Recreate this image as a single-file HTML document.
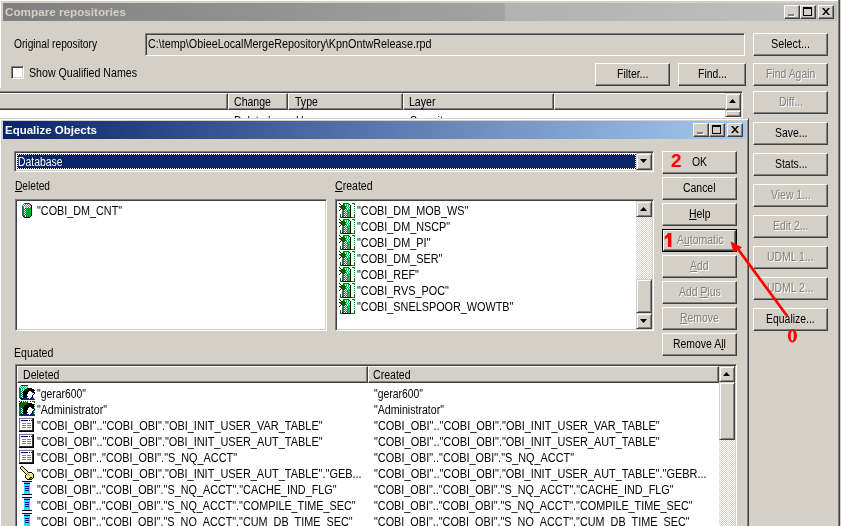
<!DOCTYPE html><html><head><meta charset="utf-8"><style>
html,body{margin:0;padding:0;}
body{width:841px;height:526px;overflow:hidden;position:relative;background:#d4d0c8;font-family:'Liberation Sans',sans-serif;font-size:12px;}
div{position:absolute;box-sizing:border-box;}
svg{position:absolute;}
.t{white-space:nowrap;line-height:15px;transform-origin:0 0;}
.dis{color:#808080 !important;text-shadow:1px 1px 0 #fff;}
.btn{background:#d4d0c8;border-top:1px solid #fff;border-left:1px solid #fff;border-right:1px solid #404040;border-bottom:1px solid #404040;box-shadow:inset -1px -1px 0 #808080;}
.sbtn{background:#d4d0c8;border-top:1px solid #d4d0c8;border-left:1px solid #d4d0c8;border-right:1px solid #404040;border-bottom:1px solid #404040;box-shadow:inset 1px 1px 0 #fff, inset -1px -1px 0 #808080;}
.sunk{border-top:1px solid #808080;border-left:1px solid #808080;border-right:1px solid #fff;border-bottom:1px solid #fff;box-shadow:inset 1px 1px 0 #404040, inset -1px -1px 0 #d4d0c8;}
.hd{background:#d4d0c8;border-top:1px solid #fff;border-left:1px solid #fff;border-right:1px solid #404040;border-bottom:1px solid #404040;box-shadow:inset -1px -1px 0 #808080;}
u{text-decoration:underline;text-underline-offset:1px;}
.chk{background-image:linear-gradient(45deg,#fff 25%,transparent 25%,transparent 75%,#fff 75%),linear-gradient(45deg,#fff 25%,transparent 25%,transparent 75%,#fff 75%);background-size:2px 2px;background-position:0 0,1px 1px;background-color:#d4d0c8;}
.red{color:#f00;font-weight:bold;font-size:19px;line-height:20px;white-space:nowrap;transform-origin:0 0;}
</style></head><body>
<div style="left:0;top:0;width:839px;height:88px;border-top:1px solid #fff;border-left:1px solid #fff;"></div>
<div style="left:838px;top:0;width:1px;height:526px;background:#808080"></div>
<div style="left:839px;top:0;width:1px;height:526px;background:#404040"></div>
<div style="left:3px;top:3px;width:834px;height:18px;background:linear-gradient(to right,#808080 0px,#a2a3a2 502px,#b0b1b0 502px,#c0c0c0 833px)"></div>
<div class="t" style="left:5px;top:5px;color:#d4d0c8;font-weight:bold;font-size:11px;transform:scaleX(1.0637);">Compare repositories</div>
<div class="btn" style="left:784px;top:5px;width:16px;height:14px;"></div>
<div class="btn" style="left:800px;top:5px;width:16px;height:14px;"></div>
<div class="btn" style="left:818px;top:5px;width:16px;height:14px;"></div>
<div style="left:789px;top:15px;width:6px;height:2px;background:#fff"></div>
<div style="left:788px;top:14px;width:6px;height:2px;background:#808080"></div>
<div style="left:803px;top:7px;width:9px;height:9px;border:1px solid #000;border-top-width:2px"></div>
<svg style="left:822px;top:8px" width="8" height="7" viewBox="0 0 8 7"><path d="M0 0h2l2 2.5L6 0h2L5 3.5 8 7H6L4 4.5 2 7H0l3-3.5z" fill="#000"/></svg>
<div class="t" style="left:14px;top:37px;color:#000;font-size:12px;transform:scaleX(0.8524);">Original repository</div>
<div class="sunk" style="left:145px;top:33px;width:600px;height:23px;background:#d4d0c8;"></div>
<div class="t" style="left:148px;top:37px;color:#000;font-size:12px;transform:scaleX(0.9006);">C:\temp\ObieeLocalMergeRepository\KpnOntwRelease.rpd</div>
<div class="btn" style="left:753px;top:33px;width:75px;height:23px;"></div>
<div class="t" style="left:771.0px;top:37px;color:#000;font-size:12px;transform:scaleX(0.9001);">Select...</div>
<div class="sunk" style="left:11px;top:66px;width:13px;height:13px;background:#fff;"></div>
<div class="t" style="left:29px;top:66px;color:#000;font-size:12px;transform:scaleX(0.8849);">Show Qualified Names</div>
<div class="btn" style="left:595px;top:63px;width:75px;height:23px;"></div>
<div class="t" style="left:617.0px;top:67px;color:#000;font-size:12px;transform:scaleX(0.8700);">Filter...</div>
<div class="btn" style="left:678px;top:63px;width:68px;height:23px;"></div>
<div class="t" style="left:697.5px;top:67px;color:#000;font-size:12px;transform:scaleX(0.8700);">Find...</div>
<div class="btn" style="left:753px;top:63px;width:75px;height:23px;"></div>
<div class="t dis" style="left:766.0px;top:67px;color:#000;font-size:12px;transform:scaleX(0.8700);">Find Again</div>
<div style="left:0;top:91px;width:743px;height:40px;background:#fff;border-top:1px solid #808080;border-right:1px solid #fff;box-shadow:inset 0 1px 0 #404040, inset -1px 0 0 #d4d0c8"></div>
<div class="hd" style="left:-1px;top:93px;width:229px;height:17px"></div>
<div class="hd" style="left:228px;top:93px;width:60px;height:17px"></div>
<div class="t" style="left:234px;top:95px;color:#000;font-size:12px;transform:scaleX(0.8800);">Change</div>
<div class="hd" style="left:288px;top:93px;width:115px;height:17px"></div>
<div class="t" style="left:295px;top:95px;color:#000;font-size:12px;transform:scaleX(0.8800);">Type</div>
<div class="hd" style="left:403px;top:93px;width:151px;height:17px"></div>
<div class="t" style="left:409px;top:95px;color:#000;font-size:12px;transform:scaleX(0.8800);">Layer</div>
<div class="hd" style="left:554px;top:93px;width:187px;height:17px"></div>
<div class="t" style="left:234px;top:114px;color:#000;font-size:12px;transform:scaleX(0.8800);">Deleted</div>
<div class="t" style="left:296px;top:114px;color:#000;font-size:12px;transform:scaleX(0.8800);">User</div>
<div class="t" style="left:410px;top:114px;color:#000;font-size:12px;transform:scaleX(0.8800);">Security</div>
<div class="sbtn" style="left:725px;top:93px;width:16px;height:17px;"></div>
<svg style="left:729px;top:99px" width="7" height="4"><path d="M3.5 0L7 4H0z" fill="#000"/></svg>
<div class="sbtn" style="left:725px;top:110px;width:16px;height:7px;"></div>
<div class="btn" style="left:753px;top:91px;width:75px;height:23px;"></div>
<div class="t dis" style="left:778.5px;top:95px;color:#000;font-size:12px;transform:scaleX(0.8700);">Diff...</div>
<div class="btn" style="left:753px;top:122px;width:75px;height:23px;"></div>
<div class="t" style="left:774.5px;top:126px;color:#000;font-size:12px;transform:scaleX(0.8700);">Save...</div>
<div class="btn" style="left:753px;top:153px;width:75px;height:23px;"></div>
<div class="t" style="left:774.5px;top:157px;color:#000;font-size:12px;transform:scaleX(0.8700);">Stats...</div>
<div class="btn" style="left:753px;top:184px;width:75px;height:23px;"></div>
<div class="t dis" style="left:770.5px;top:188px;color:#000;font-size:12px;transform:scaleX(0.8700);">View 1...</div>
<div class="btn" style="left:753px;top:215px;width:75px;height:23px;"></div>
<div class="t dis" style="left:773.0px;top:219px;color:#000;font-size:12px;transform:scaleX(0.8700);">Edit 2...</div>
<div class="btn" style="left:753px;top:246px;width:75px;height:23px;"></div>
<div class="t dis" style="left:767.0px;top:250px;color:#000;font-size:12px;transform:scaleX(0.8700);">UDML 1...</div>
<div class="btn" style="left:753px;top:277px;width:75px;height:23px;"></div>
<div class="t dis" style="left:767.0px;top:281px;color:#000;font-size:12px;transform:scaleX(0.8700);">UDML 2...</div>
<div class="btn" style="left:753px;top:308px;width:75px;height:23px;"></div>
<div class="t" style="left:766.0px;top:312px;color:#000;font-size:12px;transform:scaleX(0.8700);">Equalize...</div>
<div style="left:-1px;top:118px;width:750px;height:420px;background:#d4d0c8;border-top:1px solid #d4d0c8;border-left:1px solid #d4d0c8;border-right:1px solid #404040;box-shadow:inset 1px 1px 0 #fff, inset -1px 0 0 #808080"></div>
<div style="left:3px;top:121px;width:743px;height:18px;background:linear-gradient(to right,#0a246a,#a6caf0)"></div>
<div class="t" style="left:5px;top:123px;color:#fff;font-weight:bold;font-size:11px;transform:scaleX(1.0443);">Equalize Objects</div>
<div class="btn" style="left:693px;top:123px;width:16px;height:14px;"></div>
<div class="btn" style="left:709px;top:123px;width:16px;height:14px;"></div>
<div class="btn" style="left:727px;top:123px;width:16px;height:14px;"></div>
<div style="left:698px;top:133px;width:6px;height:2px;background:#fff"></div>
<div style="left:697px;top:132px;width:6px;height:2px;background:#808080"></div>
<div style="left:712px;top:125px;width:9px;height:9px;border:1px solid #000;border-top-width:2px"></div>
<svg style="left:731px;top:126px" width="8" height="7" viewBox="0 0 8 7"><path d="M0 0h2l2 2.5L6 0h2L5 3.5 8 7H6L4 4.5 2 7H0l3-3.5z" fill="#000"/></svg>
<div class="sunk" style="left:14px;top:151px;width:640px;height:21px;background:#fff;"></div>
<div style="left:17px;top:154px;width:619px;height:15px;background:#0a246a;border:1px dotted #000;background-clip:padding-box"></div>
<div class="t" style="left:18px;top:155px;color:#fff;font-size:12px;transform:scaleX(0.8684);">Database</div>
<div class="sbtn" style="left:636px;top:153px;width:16px;height:17px;"></div>
<svg style="left:640px;top:159px" width="7" height="4"><path d="M0 0h7L3.5 4z" fill="#000"/></svg>
<div class="t" style="left:15px;top:179px;color:#000;font-size:12px;transform:scaleX(0.8462);"><u>D</u>eleted</div>
<div class="t" style="left:335px;top:179px;color:#000;font-size:12px;transform:scaleX(0.8800);"><u>C</u>reated</div>
<div class="sunk" style="left:15px;top:199px;width:312px;height:132px;background:#fff;"></div>
<div class="sunk" style="left:335px;top:199px;width:319px;height:132px;background:#fff;"></div>
<div class="chk" style="left:636px;top:217px;width:16px;height:62px"></div>
<div class="sbtn" style="left:636px;top:201px;width:16px;height:16px;"></div>
<svg style="left:640px;top:207px" width="7" height="4"><path d="M3.5 0L7 4H0z" fill="#000"/></svg>
<div class="sbtn" style="left:636px;top:279px;width:16px;height:34px;"></div>
<div class="sbtn" style="left:636px;top:313px;width:16px;height:16px;"></div>
<svg style="left:640px;top:319px" width="7" height="4"><path d="M0 0h7L3.5 4z" fill="#000"/></svg>
<svg style="left:22px;top:203px" width="10" height="15" shape-rendering="crispEdges"><rect x="2" y="0" width="1" height="1" fill="#808080"/><rect x="3" y="0" width="4" height="1" fill="#303030"/><rect x="7" y="0" width="1" height="1" fill="#808080"/><rect x="1" y="1" width="1" height="1" fill="#00c040"/><rect x="2" y="1" width="1" height="1" fill="#ffffff"/><rect x="3" y="1" width="1" height="1" fill="#00c040"/><rect x="4" y="1" width="1" height="1" fill="#ffffff"/><rect x="5" y="1" width="1" height="1" fill="#00c040"/><rect x="6" y="1" width="1" height="1" fill="#ffffff"/><rect x="7" y="1" width="1" height="1" fill="#00c040"/><rect x="8" y="1" width="1" height="1" fill="#303030"/><rect x="0" y="2" width="1" height="1" fill="#40a090"/><rect x="1" y="2" width="1" height="1" fill="#ffffff"/><rect x="2" y="2" width="1" height="1" fill="#00c040"/><rect x="3" y="2" width="1" height="1" fill="#ffffff"/><rect x="4" y="2" width="1" height="1" fill="#00c040"/><rect x="5" y="2" width="1" height="1" fill="#ffffff"/><rect x="6" y="2" width="1" height="1" fill="#00c040"/><rect x="7" y="2" width="1" height="1" fill="#ffffff"/><rect x="8" y="2" width="1" height="1" fill="#00c040"/><rect x="9" y="2" width="1" height="1" fill="#000000"/><rect x="0" y="3" width="1" height="1" fill="#207070"/><rect x="1" y="3" width="1" height="1" fill="#40a090"/><rect x="2" y="3" width="1" height="1" fill="#ffffff"/><rect x="3" y="3" width="1" height="1" fill="#00c040"/><rect x="4" y="3" width="1" height="1" fill="#ffffff"/><rect x="5" y="3" width="1" height="1" fill="#00c040"/><rect x="6" y="3" width="1" height="1" fill="#ffffff"/><rect x="7" y="3" width="1" height="1" fill="#00c040"/><rect x="8" y="3" width="1" height="1" fill="#ffffff"/><rect x="9" y="3" width="1" height="1" fill="#000000"/><rect x="0" y="4" width="2" height="1" fill="#207070"/><rect x="2" y="4" width="2" height="1" fill="#ffffff"/><rect x="4" y="4" width="1" height="1" fill="#00c040"/><rect x="5" y="4" width="1" height="1" fill="#ffffff"/><rect x="6" y="4" width="1" height="1" fill="#00c040"/><rect x="7" y="4" width="1" height="1" fill="#ffffff"/><rect x="8" y="4" width="1" height="1" fill="#00c040"/><rect x="9" y="4" width="1" height="1" fill="#000000"/><rect x="0" y="5" width="2" height="1" fill="#207070"/><rect x="2" y="5" width="1" height="1" fill="#ffffff"/><rect x="3" y="5" width="1" height="1" fill="#008040"/><rect x="4" y="5" width="1" height="1" fill="#00c040"/><rect x="5" y="5" width="1" height="1" fill="#008040"/><rect x="6" y="5" width="1" height="1" fill="#00c040"/><rect x="7" y="5" width="1" height="1" fill="#008040"/><rect x="8" y="5" width="1" height="1" fill="#00c040"/><rect x="9" y="5" width="1" height="1" fill="#000000"/><rect x="0" y="6" width="2" height="1" fill="#207070"/><rect x="2" y="6" width="1" height="1" fill="#008040"/><rect x="3" y="6" width="1" height="1" fill="#ffffff"/><rect x="4" y="6" width="1" height="1" fill="#008040"/><rect x="5" y="6" width="1" height="1" fill="#00c040"/><rect x="6" y="6" width="1" height="1" fill="#008040"/><rect x="7" y="6" width="2" height="1" fill="#00c040"/><rect x="9" y="6" width="1" height="1" fill="#000000"/><rect x="0" y="7" width="2" height="1" fill="#207070"/><rect x="2" y="7" width="1" height="1" fill="#ffffff"/><rect x="3" y="7" width="1" height="1" fill="#008040"/><rect x="4" y="7" width="1" height="1" fill="#00c040"/><rect x="5" y="7" width="1" height="1" fill="#008040"/><rect x="6" y="7" width="1" height="1" fill="#00c040"/><rect x="7" y="7" width="1" height="1" fill="#008040"/><rect x="8" y="7" width="1" height="1" fill="#00c040"/><rect x="9" y="7" width="1" height="1" fill="#000000"/><rect x="0" y="8" width="2" height="1" fill="#207070"/><rect x="2" y="8" width="1" height="1" fill="#008040"/><rect x="3" y="8" width="1" height="1" fill="#ffffff"/><rect x="4" y="8" width="1" height="1" fill="#008040"/><rect x="5" y="8" width="1" height="1" fill="#00c040"/><rect x="6" y="8" width="1" height="1" fill="#008040"/><rect x="7" y="8" width="2" height="1" fill="#00c040"/><rect x="9" y="8" width="1" height="1" fill="#000000"/><rect x="0" y="9" width="2" height="1" fill="#207070"/><rect x="2" y="9" width="1" height="1" fill="#ffffff"/><rect x="3" y="9" width="1" height="1" fill="#008040"/><rect x="4" y="9" width="1" height="1" fill="#00c040"/><rect x="5" y="9" width="1" height="1" fill="#008040"/><rect x="6" y="9" width="1" height="1" fill="#00c040"/><rect x="7" y="9" width="1" height="1" fill="#008040"/><rect x="8" y="9" width="1" height="1" fill="#00c040"/><rect x="9" y="9" width="1" height="1" fill="#000000"/><rect x="0" y="10" width="2" height="1" fill="#207070"/><rect x="2" y="10" width="1" height="1" fill="#008040"/><rect x="3" y="10" width="1" height="1" fill="#ffffff"/><rect x="4" y="10" width="1" height="1" fill="#008040"/><rect x="5" y="10" width="1" height="1" fill="#00c040"/><rect x="6" y="10" width="1" height="1" fill="#008040"/><rect x="7" y="10" width="2" height="1" fill="#00c040"/><rect x="9" y="10" width="1" height="1" fill="#000000"/><rect x="0" y="11" width="2" height="1" fill="#207070"/><rect x="2" y="11" width="1" height="1" fill="#ffffff"/><rect x="3" y="11" width="1" height="1" fill="#008040"/><rect x="4" y="11" width="1" height="1" fill="#00c040"/><rect x="5" y="11" width="1" height="1" fill="#008040"/><rect x="6" y="11" width="1" height="1" fill="#00c040"/><rect x="7" y="11" width="1" height="1" fill="#008040"/><rect x="8" y="11" width="1" height="1" fill="#00c040"/><rect x="9" y="11" width="1" height="1" fill="#000000"/><rect x="0" y="12" width="2" height="1" fill="#207070"/><rect x="2" y="12" width="1" height="1" fill="#008040"/><rect x="3" y="12" width="1" height="1" fill="#ffffff"/><rect x="4" y="12" width="1" height="1" fill="#008040"/><rect x="5" y="12" width="1" height="1" fill="#00c040"/><rect x="6" y="12" width="1" height="1" fill="#008040"/><rect x="7" y="12" width="2" height="1" fill="#00c040"/><rect x="9" y="12" width="1" height="1" fill="#000000"/><rect x="1" y="13" width="1" height="1" fill="#000000"/><rect x="2" y="13" width="1" height="1" fill="#207070"/><rect x="3" y="13" width="1" height="1" fill="#ffffff"/><rect x="4" y="13" width="1" height="1" fill="#008040"/><rect x="5" y="13" width="1" height="1" fill="#00c040"/><rect x="6" y="13" width="1" height="1" fill="#008040"/><rect x="7" y="13" width="1" height="1" fill="#00c040"/><rect x="8" y="13" width="1" height="1" fill="#000000"/><rect x="2" y="14" width="6" height="1" fill="#000000"/></svg>
<div class="t" style="left:37px;top:204px;color:#000;font-size:12px;transform:scaleX(0.9000);">"COBI_DM_CNT"</div>
<svg style="left:339px;top:203px" width="16" height="15" shape-rendering="crispEdges"><rect x="0" y="0" width="1" height="1" fill="#000000"/><rect x="4" y="0" width="6" height="1" fill="#008000"/><rect x="13" y="0" width="3" height="1" fill="#008000"/><rect x="1" y="1" width="1" height="1" fill="#000000"/><rect x="4" y="1" width="1" height="1" fill="#006000"/><rect x="5" y="1" width="1" height="1" fill="#00c040"/><rect x="6" y="1" width="1" height="1" fill="#ffffff"/><rect x="7" y="1" width="1" height="1" fill="#00c040"/><rect x="8" y="1" width="1" height="1" fill="#ffffff"/><rect x="9" y="1" width="1" height="1" fill="#00c040"/><rect x="10" y="1" width="1" height="1" fill="#303030"/><rect x="15" y="1" width="1" height="1" fill="#008000"/><rect x="2" y="2" width="4" height="1" fill="#006000"/><rect x="6" y="2" width="1" height="1" fill="#ffffff"/><rect x="7" y="2" width="1" height="1" fill="#00c040"/><rect x="8" y="2" width="1" height="1" fill="#ffffff"/><rect x="9" y="2" width="1" height="1" fill="#00c040"/><rect x="10" y="2" width="1" height="1" fill="#ffffff"/><rect x="11" y="2" width="1" height="1" fill="#000000"/><rect x="0" y="3" width="1" height="1" fill="#000000"/><rect x="1" y="3" width="6" height="1" fill="#006000"/><rect x="7" y="3" width="1" height="1" fill="#00c040"/><rect x="8" y="3" width="1" height="1" fill="#ffffff"/><rect x="9" y="3" width="1" height="1" fill="#00c040"/><rect x="10" y="3" width="1" height="1" fill="#ffffff"/><rect x="11" y="3" width="1" height="1" fill="#000000"/><rect x="15" y="3" width="1" height="1" fill="#008000"/><rect x="1" y="4" width="6" height="1" fill="#006000"/><rect x="7" y="4" width="1" height="1" fill="#ffffff"/><rect x="8" y="4" width="1" height="1" fill="#00c040"/><rect x="9" y="4" width="1" height="1" fill="#ffffff"/><rect x="10" y="4" width="1" height="1" fill="#00c040"/><rect x="11" y="4" width="1" height="1" fill="#000000"/><rect x="2" y="5" width="5" height="1" fill="#006000"/><rect x="7" y="5" width="1" height="1" fill="#00c040"/><rect x="8" y="5" width="1" height="1" fill="#ffffff"/><rect x="9" y="5" width="1" height="1" fill="#00c040"/><rect x="10" y="5" width="1" height="1" fill="#ffffff"/><rect x="11" y="5" width="1" height="1" fill="#000000"/><rect x="15" y="5" width="1" height="1" fill="#008000"/><rect x="1" y="6" width="1" height="1" fill="#000000"/><rect x="3" y="6" width="3" height="1" fill="#006000"/><rect x="6" y="6" width="1" height="1" fill="#ffffff"/><rect x="7" y="6" width="1" height="1" fill="#008040"/><rect x="8" y="6" width="1" height="1" fill="#ffffff"/><rect x="9" y="6" width="2" height="1" fill="#00c040"/><rect x="11" y="6" width="1" height="1" fill="#000000"/><rect x="0" y="7" width="1" height="1" fill="#000000"/><rect x="3" y="7" width="2" height="1" fill="#207070"/><rect x="5" y="7" width="1" height="1" fill="#ffffff"/><rect x="6" y="7" width="1" height="1" fill="#008040"/><rect x="7" y="7" width="1" height="1" fill="#ffffff"/><rect x="8" y="7" width="1" height="1" fill="#008040"/><rect x="9" y="7" width="2" height="1" fill="#00c040"/><rect x="11" y="7" width="1" height="1" fill="#000000"/><rect x="15" y="7" width="1" height="1" fill="#008000"/><rect x="3" y="8" width="2" height="1" fill="#207070"/><rect x="5" y="8" width="1" height="1" fill="#008040"/><rect x="6" y="8" width="1" height="1" fill="#ffffff"/><rect x="7" y="8" width="1" height="1" fill="#008040"/><rect x="8" y="8" width="3" height="1" fill="#00c040"/><rect x="11" y="8" width="1" height="1" fill="#000000"/><rect x="3" y="9" width="2" height="1" fill="#207070"/><rect x="5" y="9" width="1" height="1" fill="#ffffff"/><rect x="6" y="9" width="1" height="1" fill="#008040"/><rect x="7" y="9" width="1" height="1" fill="#ffffff"/><rect x="8" y="9" width="1" height="1" fill="#008040"/><rect x="9" y="9" width="2" height="1" fill="#00c040"/><rect x="11" y="9" width="1" height="1" fill="#000000"/><rect x="15" y="9" width="1" height="1" fill="#008000"/><rect x="3" y="10" width="2" height="1" fill="#207070"/><rect x="5" y="10" width="1" height="1" fill="#008040"/><rect x="6" y="10" width="1" height="1" fill="#ffffff"/><rect x="7" y="10" width="1" height="1" fill="#008040"/><rect x="8" y="10" width="3" height="1" fill="#00c040"/><rect x="11" y="10" width="1" height="1" fill="#000000"/><rect x="1" y="11" width="1" height="1" fill="#008000"/><rect x="3" y="11" width="2" height="1" fill="#207070"/><rect x="5" y="11" width="1" height="1" fill="#ffffff"/><rect x="6" y="11" width="1" height="1" fill="#008040"/><rect x="7" y="11" width="1" height="1" fill="#ffffff"/><rect x="8" y="11" width="1" height="1" fill="#008040"/><rect x="9" y="11" width="2" height="1" fill="#00c040"/><rect x="11" y="11" width="1" height="1" fill="#000000"/><rect x="15" y="11" width="1" height="1" fill="#008000"/><rect x="1" y="12" width="1" height="1" fill="#008000"/><rect x="3" y="12" width="2" height="1" fill="#207070"/><rect x="5" y="12" width="1" height="1" fill="#008040"/><rect x="6" y="12" width="1" height="1" fill="#ffffff"/><rect x="7" y="12" width="1" height="1" fill="#008040"/><rect x="8" y="12" width="3" height="1" fill="#00c040"/><rect x="11" y="12" width="1" height="1" fill="#000000"/><rect x="15" y="12" width="1" height="1" fill="#008000"/><rect x="1" y="13" width="1" height="1" fill="#008000"/><rect x="3" y="13" width="1" height="1" fill="#000000"/><rect x="4" y="13" width="1" height="1" fill="#207070"/><rect x="5" y="13" width="1" height="1" fill="#ffffff"/><rect x="6" y="13" width="1" height="1" fill="#008040"/><rect x="7" y="13" width="1" height="1" fill="#ffffff"/><rect x="8" y="13" width="1" height="1" fill="#008040"/><rect x="9" y="13" width="2" height="1" fill="#00c040"/><rect x="11" y="13" width="1" height="1" fill="#000000"/><rect x="15" y="13" width="1" height="1" fill="#008000"/><rect x="1" y="14" width="3" height="1" fill="#008000"/><rect x="4" y="14" width="8" height="1" fill="#000000"/><rect x="12" y="14" width="4" height="1" fill="#008000"/></svg>
<div class="t" style="left:357px;top:204px;color:#000;font-size:12px;transform:scaleX(0.9030);">"COBI_DM_MOB_WS"</div>
<svg style="left:339px;top:219px" width="16" height="15" shape-rendering="crispEdges"><rect x="0" y="0" width="1" height="1" fill="#000000"/><rect x="4" y="0" width="6" height="1" fill="#008000"/><rect x="13" y="0" width="3" height="1" fill="#008000"/><rect x="1" y="1" width="1" height="1" fill="#000000"/><rect x="4" y="1" width="1" height="1" fill="#006000"/><rect x="5" y="1" width="1" height="1" fill="#00c040"/><rect x="6" y="1" width="1" height="1" fill="#ffffff"/><rect x="7" y="1" width="1" height="1" fill="#00c040"/><rect x="8" y="1" width="1" height="1" fill="#ffffff"/><rect x="9" y="1" width="1" height="1" fill="#00c040"/><rect x="10" y="1" width="1" height="1" fill="#303030"/><rect x="15" y="1" width="1" height="1" fill="#008000"/><rect x="2" y="2" width="4" height="1" fill="#006000"/><rect x="6" y="2" width="1" height="1" fill="#ffffff"/><rect x="7" y="2" width="1" height="1" fill="#00c040"/><rect x="8" y="2" width="1" height="1" fill="#ffffff"/><rect x="9" y="2" width="1" height="1" fill="#00c040"/><rect x="10" y="2" width="1" height="1" fill="#ffffff"/><rect x="11" y="2" width="1" height="1" fill="#000000"/><rect x="0" y="3" width="1" height="1" fill="#000000"/><rect x="1" y="3" width="6" height="1" fill="#006000"/><rect x="7" y="3" width="1" height="1" fill="#00c040"/><rect x="8" y="3" width="1" height="1" fill="#ffffff"/><rect x="9" y="3" width="1" height="1" fill="#00c040"/><rect x="10" y="3" width="1" height="1" fill="#ffffff"/><rect x="11" y="3" width="1" height="1" fill="#000000"/><rect x="15" y="3" width="1" height="1" fill="#008000"/><rect x="1" y="4" width="6" height="1" fill="#006000"/><rect x="7" y="4" width="1" height="1" fill="#ffffff"/><rect x="8" y="4" width="1" height="1" fill="#00c040"/><rect x="9" y="4" width="1" height="1" fill="#ffffff"/><rect x="10" y="4" width="1" height="1" fill="#00c040"/><rect x="11" y="4" width="1" height="1" fill="#000000"/><rect x="2" y="5" width="5" height="1" fill="#006000"/><rect x="7" y="5" width="1" height="1" fill="#00c040"/><rect x="8" y="5" width="1" height="1" fill="#ffffff"/><rect x="9" y="5" width="1" height="1" fill="#00c040"/><rect x="10" y="5" width="1" height="1" fill="#ffffff"/><rect x="11" y="5" width="1" height="1" fill="#000000"/><rect x="15" y="5" width="1" height="1" fill="#008000"/><rect x="1" y="6" width="1" height="1" fill="#000000"/><rect x="3" y="6" width="3" height="1" fill="#006000"/><rect x="6" y="6" width="1" height="1" fill="#ffffff"/><rect x="7" y="6" width="1" height="1" fill="#008040"/><rect x="8" y="6" width="1" height="1" fill="#ffffff"/><rect x="9" y="6" width="2" height="1" fill="#00c040"/><rect x="11" y="6" width="1" height="1" fill="#000000"/><rect x="0" y="7" width="1" height="1" fill="#000000"/><rect x="3" y="7" width="2" height="1" fill="#207070"/><rect x="5" y="7" width="1" height="1" fill="#ffffff"/><rect x="6" y="7" width="1" height="1" fill="#008040"/><rect x="7" y="7" width="1" height="1" fill="#ffffff"/><rect x="8" y="7" width="1" height="1" fill="#008040"/><rect x="9" y="7" width="2" height="1" fill="#00c040"/><rect x="11" y="7" width="1" height="1" fill="#000000"/><rect x="15" y="7" width="1" height="1" fill="#008000"/><rect x="3" y="8" width="2" height="1" fill="#207070"/><rect x="5" y="8" width="1" height="1" fill="#008040"/><rect x="6" y="8" width="1" height="1" fill="#ffffff"/><rect x="7" y="8" width="1" height="1" fill="#008040"/><rect x="8" y="8" width="3" height="1" fill="#00c040"/><rect x="11" y="8" width="1" height="1" fill="#000000"/><rect x="3" y="9" width="2" height="1" fill="#207070"/><rect x="5" y="9" width="1" height="1" fill="#ffffff"/><rect x="6" y="9" width="1" height="1" fill="#008040"/><rect x="7" y="9" width="1" height="1" fill="#ffffff"/><rect x="8" y="9" width="1" height="1" fill="#008040"/><rect x="9" y="9" width="2" height="1" fill="#00c040"/><rect x="11" y="9" width="1" height="1" fill="#000000"/><rect x="15" y="9" width="1" height="1" fill="#008000"/><rect x="3" y="10" width="2" height="1" fill="#207070"/><rect x="5" y="10" width="1" height="1" fill="#008040"/><rect x="6" y="10" width="1" height="1" fill="#ffffff"/><rect x="7" y="10" width="1" height="1" fill="#008040"/><rect x="8" y="10" width="3" height="1" fill="#00c040"/><rect x="11" y="10" width="1" height="1" fill="#000000"/><rect x="1" y="11" width="1" height="1" fill="#008000"/><rect x="3" y="11" width="2" height="1" fill="#207070"/><rect x="5" y="11" width="1" height="1" fill="#ffffff"/><rect x="6" y="11" width="1" height="1" fill="#008040"/><rect x="7" y="11" width="1" height="1" fill="#ffffff"/><rect x="8" y="11" width="1" height="1" fill="#008040"/><rect x="9" y="11" width="2" height="1" fill="#00c040"/><rect x="11" y="11" width="1" height="1" fill="#000000"/><rect x="15" y="11" width="1" height="1" fill="#008000"/><rect x="1" y="12" width="1" height="1" fill="#008000"/><rect x="3" y="12" width="2" height="1" fill="#207070"/><rect x="5" y="12" width="1" height="1" fill="#008040"/><rect x="6" y="12" width="1" height="1" fill="#ffffff"/><rect x="7" y="12" width="1" height="1" fill="#008040"/><rect x="8" y="12" width="3" height="1" fill="#00c040"/><rect x="11" y="12" width="1" height="1" fill="#000000"/><rect x="15" y="12" width="1" height="1" fill="#008000"/><rect x="1" y="13" width="1" height="1" fill="#008000"/><rect x="3" y="13" width="1" height="1" fill="#000000"/><rect x="4" y="13" width="1" height="1" fill="#207070"/><rect x="5" y="13" width="1" height="1" fill="#ffffff"/><rect x="6" y="13" width="1" height="1" fill="#008040"/><rect x="7" y="13" width="1" height="1" fill="#ffffff"/><rect x="8" y="13" width="1" height="1" fill="#008040"/><rect x="9" y="13" width="2" height="1" fill="#00c040"/><rect x="11" y="13" width="1" height="1" fill="#000000"/><rect x="15" y="13" width="1" height="1" fill="#008000"/><rect x="1" y="14" width="3" height="1" fill="#008000"/><rect x="4" y="14" width="8" height="1" fill="#000000"/><rect x="12" y="14" width="4" height="1" fill="#008000"/></svg>
<div class="t" style="left:357px;top:220px;color:#000;font-size:12px;transform:scaleX(0.9030);">"COBI_DM_NSCP"</div>
<svg style="left:339px;top:235px" width="16" height="15" shape-rendering="crispEdges"><rect x="0" y="0" width="1" height="1" fill="#000000"/><rect x="4" y="0" width="6" height="1" fill="#008000"/><rect x="13" y="0" width="3" height="1" fill="#008000"/><rect x="1" y="1" width="1" height="1" fill="#000000"/><rect x="4" y="1" width="1" height="1" fill="#006000"/><rect x="5" y="1" width="1" height="1" fill="#00c040"/><rect x="6" y="1" width="1" height="1" fill="#ffffff"/><rect x="7" y="1" width="1" height="1" fill="#00c040"/><rect x="8" y="1" width="1" height="1" fill="#ffffff"/><rect x="9" y="1" width="1" height="1" fill="#00c040"/><rect x="10" y="1" width="1" height="1" fill="#303030"/><rect x="15" y="1" width="1" height="1" fill="#008000"/><rect x="2" y="2" width="4" height="1" fill="#006000"/><rect x="6" y="2" width="1" height="1" fill="#ffffff"/><rect x="7" y="2" width="1" height="1" fill="#00c040"/><rect x="8" y="2" width="1" height="1" fill="#ffffff"/><rect x="9" y="2" width="1" height="1" fill="#00c040"/><rect x="10" y="2" width="1" height="1" fill="#ffffff"/><rect x="11" y="2" width="1" height="1" fill="#000000"/><rect x="0" y="3" width="1" height="1" fill="#000000"/><rect x="1" y="3" width="6" height="1" fill="#006000"/><rect x="7" y="3" width="1" height="1" fill="#00c040"/><rect x="8" y="3" width="1" height="1" fill="#ffffff"/><rect x="9" y="3" width="1" height="1" fill="#00c040"/><rect x="10" y="3" width="1" height="1" fill="#ffffff"/><rect x="11" y="3" width="1" height="1" fill="#000000"/><rect x="15" y="3" width="1" height="1" fill="#008000"/><rect x="1" y="4" width="6" height="1" fill="#006000"/><rect x="7" y="4" width="1" height="1" fill="#ffffff"/><rect x="8" y="4" width="1" height="1" fill="#00c040"/><rect x="9" y="4" width="1" height="1" fill="#ffffff"/><rect x="10" y="4" width="1" height="1" fill="#00c040"/><rect x="11" y="4" width="1" height="1" fill="#000000"/><rect x="2" y="5" width="5" height="1" fill="#006000"/><rect x="7" y="5" width="1" height="1" fill="#00c040"/><rect x="8" y="5" width="1" height="1" fill="#ffffff"/><rect x="9" y="5" width="1" height="1" fill="#00c040"/><rect x="10" y="5" width="1" height="1" fill="#ffffff"/><rect x="11" y="5" width="1" height="1" fill="#000000"/><rect x="15" y="5" width="1" height="1" fill="#008000"/><rect x="1" y="6" width="1" height="1" fill="#000000"/><rect x="3" y="6" width="3" height="1" fill="#006000"/><rect x="6" y="6" width="1" height="1" fill="#ffffff"/><rect x="7" y="6" width="1" height="1" fill="#008040"/><rect x="8" y="6" width="1" height="1" fill="#ffffff"/><rect x="9" y="6" width="2" height="1" fill="#00c040"/><rect x="11" y="6" width="1" height="1" fill="#000000"/><rect x="0" y="7" width="1" height="1" fill="#000000"/><rect x="3" y="7" width="2" height="1" fill="#207070"/><rect x="5" y="7" width="1" height="1" fill="#ffffff"/><rect x="6" y="7" width="1" height="1" fill="#008040"/><rect x="7" y="7" width="1" height="1" fill="#ffffff"/><rect x="8" y="7" width="1" height="1" fill="#008040"/><rect x="9" y="7" width="2" height="1" fill="#00c040"/><rect x="11" y="7" width="1" height="1" fill="#000000"/><rect x="15" y="7" width="1" height="1" fill="#008000"/><rect x="3" y="8" width="2" height="1" fill="#207070"/><rect x="5" y="8" width="1" height="1" fill="#008040"/><rect x="6" y="8" width="1" height="1" fill="#ffffff"/><rect x="7" y="8" width="1" height="1" fill="#008040"/><rect x="8" y="8" width="3" height="1" fill="#00c040"/><rect x="11" y="8" width="1" height="1" fill="#000000"/><rect x="3" y="9" width="2" height="1" fill="#207070"/><rect x="5" y="9" width="1" height="1" fill="#ffffff"/><rect x="6" y="9" width="1" height="1" fill="#008040"/><rect x="7" y="9" width="1" height="1" fill="#ffffff"/><rect x="8" y="9" width="1" height="1" fill="#008040"/><rect x="9" y="9" width="2" height="1" fill="#00c040"/><rect x="11" y="9" width="1" height="1" fill="#000000"/><rect x="15" y="9" width="1" height="1" fill="#008000"/><rect x="3" y="10" width="2" height="1" fill="#207070"/><rect x="5" y="10" width="1" height="1" fill="#008040"/><rect x="6" y="10" width="1" height="1" fill="#ffffff"/><rect x="7" y="10" width="1" height="1" fill="#008040"/><rect x="8" y="10" width="3" height="1" fill="#00c040"/><rect x="11" y="10" width="1" height="1" fill="#000000"/><rect x="1" y="11" width="1" height="1" fill="#008000"/><rect x="3" y="11" width="2" height="1" fill="#207070"/><rect x="5" y="11" width="1" height="1" fill="#ffffff"/><rect x="6" y="11" width="1" height="1" fill="#008040"/><rect x="7" y="11" width="1" height="1" fill="#ffffff"/><rect x="8" y="11" width="1" height="1" fill="#008040"/><rect x="9" y="11" width="2" height="1" fill="#00c040"/><rect x="11" y="11" width="1" height="1" fill="#000000"/><rect x="15" y="11" width="1" height="1" fill="#008000"/><rect x="1" y="12" width="1" height="1" fill="#008000"/><rect x="3" y="12" width="2" height="1" fill="#207070"/><rect x="5" y="12" width="1" height="1" fill="#008040"/><rect x="6" y="12" width="1" height="1" fill="#ffffff"/><rect x="7" y="12" width="1" height="1" fill="#008040"/><rect x="8" y="12" width="3" height="1" fill="#00c040"/><rect x="11" y="12" width="1" height="1" fill="#000000"/><rect x="15" y="12" width="1" height="1" fill="#008000"/><rect x="1" y="13" width="1" height="1" fill="#008000"/><rect x="3" y="13" width="1" height="1" fill="#000000"/><rect x="4" y="13" width="1" height="1" fill="#207070"/><rect x="5" y="13" width="1" height="1" fill="#ffffff"/><rect x="6" y="13" width="1" height="1" fill="#008040"/><rect x="7" y="13" width="1" height="1" fill="#ffffff"/><rect x="8" y="13" width="1" height="1" fill="#008040"/><rect x="9" y="13" width="2" height="1" fill="#00c040"/><rect x="11" y="13" width="1" height="1" fill="#000000"/><rect x="15" y="13" width="1" height="1" fill="#008000"/><rect x="1" y="14" width="3" height="1" fill="#008000"/><rect x="4" y="14" width="8" height="1" fill="#000000"/><rect x="12" y="14" width="4" height="1" fill="#008000"/></svg>
<div class="t" style="left:357px;top:236px;color:#000;font-size:12px;transform:scaleX(0.9030);">"COBI_DM_PI"</div>
<svg style="left:339px;top:251px" width="16" height="15" shape-rendering="crispEdges"><rect x="0" y="0" width="1" height="1" fill="#000000"/><rect x="4" y="0" width="6" height="1" fill="#008000"/><rect x="13" y="0" width="3" height="1" fill="#008000"/><rect x="1" y="1" width="1" height="1" fill="#000000"/><rect x="4" y="1" width="1" height="1" fill="#006000"/><rect x="5" y="1" width="1" height="1" fill="#00c040"/><rect x="6" y="1" width="1" height="1" fill="#ffffff"/><rect x="7" y="1" width="1" height="1" fill="#00c040"/><rect x="8" y="1" width="1" height="1" fill="#ffffff"/><rect x="9" y="1" width="1" height="1" fill="#00c040"/><rect x="10" y="1" width="1" height="1" fill="#303030"/><rect x="15" y="1" width="1" height="1" fill="#008000"/><rect x="2" y="2" width="4" height="1" fill="#006000"/><rect x="6" y="2" width="1" height="1" fill="#ffffff"/><rect x="7" y="2" width="1" height="1" fill="#00c040"/><rect x="8" y="2" width="1" height="1" fill="#ffffff"/><rect x="9" y="2" width="1" height="1" fill="#00c040"/><rect x="10" y="2" width="1" height="1" fill="#ffffff"/><rect x="11" y="2" width="1" height="1" fill="#000000"/><rect x="0" y="3" width="1" height="1" fill="#000000"/><rect x="1" y="3" width="6" height="1" fill="#006000"/><rect x="7" y="3" width="1" height="1" fill="#00c040"/><rect x="8" y="3" width="1" height="1" fill="#ffffff"/><rect x="9" y="3" width="1" height="1" fill="#00c040"/><rect x="10" y="3" width="1" height="1" fill="#ffffff"/><rect x="11" y="3" width="1" height="1" fill="#000000"/><rect x="15" y="3" width="1" height="1" fill="#008000"/><rect x="1" y="4" width="6" height="1" fill="#006000"/><rect x="7" y="4" width="1" height="1" fill="#ffffff"/><rect x="8" y="4" width="1" height="1" fill="#00c040"/><rect x="9" y="4" width="1" height="1" fill="#ffffff"/><rect x="10" y="4" width="1" height="1" fill="#00c040"/><rect x="11" y="4" width="1" height="1" fill="#000000"/><rect x="2" y="5" width="5" height="1" fill="#006000"/><rect x="7" y="5" width="1" height="1" fill="#00c040"/><rect x="8" y="5" width="1" height="1" fill="#ffffff"/><rect x="9" y="5" width="1" height="1" fill="#00c040"/><rect x="10" y="5" width="1" height="1" fill="#ffffff"/><rect x="11" y="5" width="1" height="1" fill="#000000"/><rect x="15" y="5" width="1" height="1" fill="#008000"/><rect x="1" y="6" width="1" height="1" fill="#000000"/><rect x="3" y="6" width="3" height="1" fill="#006000"/><rect x="6" y="6" width="1" height="1" fill="#ffffff"/><rect x="7" y="6" width="1" height="1" fill="#008040"/><rect x="8" y="6" width="1" height="1" fill="#ffffff"/><rect x="9" y="6" width="2" height="1" fill="#00c040"/><rect x="11" y="6" width="1" height="1" fill="#000000"/><rect x="0" y="7" width="1" height="1" fill="#000000"/><rect x="3" y="7" width="2" height="1" fill="#207070"/><rect x="5" y="7" width="1" height="1" fill="#ffffff"/><rect x="6" y="7" width="1" height="1" fill="#008040"/><rect x="7" y="7" width="1" height="1" fill="#ffffff"/><rect x="8" y="7" width="1" height="1" fill="#008040"/><rect x="9" y="7" width="2" height="1" fill="#00c040"/><rect x="11" y="7" width="1" height="1" fill="#000000"/><rect x="15" y="7" width="1" height="1" fill="#008000"/><rect x="3" y="8" width="2" height="1" fill="#207070"/><rect x="5" y="8" width="1" height="1" fill="#008040"/><rect x="6" y="8" width="1" height="1" fill="#ffffff"/><rect x="7" y="8" width="1" height="1" fill="#008040"/><rect x="8" y="8" width="3" height="1" fill="#00c040"/><rect x="11" y="8" width="1" height="1" fill="#000000"/><rect x="3" y="9" width="2" height="1" fill="#207070"/><rect x="5" y="9" width="1" height="1" fill="#ffffff"/><rect x="6" y="9" width="1" height="1" fill="#008040"/><rect x="7" y="9" width="1" height="1" fill="#ffffff"/><rect x="8" y="9" width="1" height="1" fill="#008040"/><rect x="9" y="9" width="2" height="1" fill="#00c040"/><rect x="11" y="9" width="1" height="1" fill="#000000"/><rect x="15" y="9" width="1" height="1" fill="#008000"/><rect x="3" y="10" width="2" height="1" fill="#207070"/><rect x="5" y="10" width="1" height="1" fill="#008040"/><rect x="6" y="10" width="1" height="1" fill="#ffffff"/><rect x="7" y="10" width="1" height="1" fill="#008040"/><rect x="8" y="10" width="3" height="1" fill="#00c040"/><rect x="11" y="10" width="1" height="1" fill="#000000"/><rect x="1" y="11" width="1" height="1" fill="#008000"/><rect x="3" y="11" width="2" height="1" fill="#207070"/><rect x="5" y="11" width="1" height="1" fill="#ffffff"/><rect x="6" y="11" width="1" height="1" fill="#008040"/><rect x="7" y="11" width="1" height="1" fill="#ffffff"/><rect x="8" y="11" width="1" height="1" fill="#008040"/><rect x="9" y="11" width="2" height="1" fill="#00c040"/><rect x="11" y="11" width="1" height="1" fill="#000000"/><rect x="15" y="11" width="1" height="1" fill="#008000"/><rect x="1" y="12" width="1" height="1" fill="#008000"/><rect x="3" y="12" width="2" height="1" fill="#207070"/><rect x="5" y="12" width="1" height="1" fill="#008040"/><rect x="6" y="12" width="1" height="1" fill="#ffffff"/><rect x="7" y="12" width="1" height="1" fill="#008040"/><rect x="8" y="12" width="3" height="1" fill="#00c040"/><rect x="11" y="12" width="1" height="1" fill="#000000"/><rect x="15" y="12" width="1" height="1" fill="#008000"/><rect x="1" y="13" width="1" height="1" fill="#008000"/><rect x="3" y="13" width="1" height="1" fill="#000000"/><rect x="4" y="13" width="1" height="1" fill="#207070"/><rect x="5" y="13" width="1" height="1" fill="#ffffff"/><rect x="6" y="13" width="1" height="1" fill="#008040"/><rect x="7" y="13" width="1" height="1" fill="#ffffff"/><rect x="8" y="13" width="1" height="1" fill="#008040"/><rect x="9" y="13" width="2" height="1" fill="#00c040"/><rect x="11" y="13" width="1" height="1" fill="#000000"/><rect x="15" y="13" width="1" height="1" fill="#008000"/><rect x="1" y="14" width="3" height="1" fill="#008000"/><rect x="4" y="14" width="8" height="1" fill="#000000"/><rect x="12" y="14" width="4" height="1" fill="#008000"/></svg>
<div class="t" style="left:357px;top:252px;color:#000;font-size:12px;transform:scaleX(0.9030);">"COBI_DM_SER"</div>
<svg style="left:339px;top:267px" width="16" height="15" shape-rendering="crispEdges"><rect x="0" y="0" width="1" height="1" fill="#000000"/><rect x="4" y="0" width="6" height="1" fill="#008000"/><rect x="13" y="0" width="3" height="1" fill="#008000"/><rect x="1" y="1" width="1" height="1" fill="#000000"/><rect x="4" y="1" width="1" height="1" fill="#006000"/><rect x="5" y="1" width="1" height="1" fill="#00c040"/><rect x="6" y="1" width="1" height="1" fill="#ffffff"/><rect x="7" y="1" width="1" height="1" fill="#00c040"/><rect x="8" y="1" width="1" height="1" fill="#ffffff"/><rect x="9" y="1" width="1" height="1" fill="#00c040"/><rect x="10" y="1" width="1" height="1" fill="#303030"/><rect x="15" y="1" width="1" height="1" fill="#008000"/><rect x="2" y="2" width="4" height="1" fill="#006000"/><rect x="6" y="2" width="1" height="1" fill="#ffffff"/><rect x="7" y="2" width="1" height="1" fill="#00c040"/><rect x="8" y="2" width="1" height="1" fill="#ffffff"/><rect x="9" y="2" width="1" height="1" fill="#00c040"/><rect x="10" y="2" width="1" height="1" fill="#ffffff"/><rect x="11" y="2" width="1" height="1" fill="#000000"/><rect x="0" y="3" width="1" height="1" fill="#000000"/><rect x="1" y="3" width="6" height="1" fill="#006000"/><rect x="7" y="3" width="1" height="1" fill="#00c040"/><rect x="8" y="3" width="1" height="1" fill="#ffffff"/><rect x="9" y="3" width="1" height="1" fill="#00c040"/><rect x="10" y="3" width="1" height="1" fill="#ffffff"/><rect x="11" y="3" width="1" height="1" fill="#000000"/><rect x="15" y="3" width="1" height="1" fill="#008000"/><rect x="1" y="4" width="6" height="1" fill="#006000"/><rect x="7" y="4" width="1" height="1" fill="#ffffff"/><rect x="8" y="4" width="1" height="1" fill="#00c040"/><rect x="9" y="4" width="1" height="1" fill="#ffffff"/><rect x="10" y="4" width="1" height="1" fill="#00c040"/><rect x="11" y="4" width="1" height="1" fill="#000000"/><rect x="2" y="5" width="5" height="1" fill="#006000"/><rect x="7" y="5" width="1" height="1" fill="#00c040"/><rect x="8" y="5" width="1" height="1" fill="#ffffff"/><rect x="9" y="5" width="1" height="1" fill="#00c040"/><rect x="10" y="5" width="1" height="1" fill="#ffffff"/><rect x="11" y="5" width="1" height="1" fill="#000000"/><rect x="15" y="5" width="1" height="1" fill="#008000"/><rect x="1" y="6" width="1" height="1" fill="#000000"/><rect x="3" y="6" width="3" height="1" fill="#006000"/><rect x="6" y="6" width="1" height="1" fill="#ffffff"/><rect x="7" y="6" width="1" height="1" fill="#008040"/><rect x="8" y="6" width="1" height="1" fill="#ffffff"/><rect x="9" y="6" width="2" height="1" fill="#00c040"/><rect x="11" y="6" width="1" height="1" fill="#000000"/><rect x="0" y="7" width="1" height="1" fill="#000000"/><rect x="3" y="7" width="2" height="1" fill="#207070"/><rect x="5" y="7" width="1" height="1" fill="#ffffff"/><rect x="6" y="7" width="1" height="1" fill="#008040"/><rect x="7" y="7" width="1" height="1" fill="#ffffff"/><rect x="8" y="7" width="1" height="1" fill="#008040"/><rect x="9" y="7" width="2" height="1" fill="#00c040"/><rect x="11" y="7" width="1" height="1" fill="#000000"/><rect x="15" y="7" width="1" height="1" fill="#008000"/><rect x="3" y="8" width="2" height="1" fill="#207070"/><rect x="5" y="8" width="1" height="1" fill="#008040"/><rect x="6" y="8" width="1" height="1" fill="#ffffff"/><rect x="7" y="8" width="1" height="1" fill="#008040"/><rect x="8" y="8" width="3" height="1" fill="#00c040"/><rect x="11" y="8" width="1" height="1" fill="#000000"/><rect x="3" y="9" width="2" height="1" fill="#207070"/><rect x="5" y="9" width="1" height="1" fill="#ffffff"/><rect x="6" y="9" width="1" height="1" fill="#008040"/><rect x="7" y="9" width="1" height="1" fill="#ffffff"/><rect x="8" y="9" width="1" height="1" fill="#008040"/><rect x="9" y="9" width="2" height="1" fill="#00c040"/><rect x="11" y="9" width="1" height="1" fill="#000000"/><rect x="15" y="9" width="1" height="1" fill="#008000"/><rect x="3" y="10" width="2" height="1" fill="#207070"/><rect x="5" y="10" width="1" height="1" fill="#008040"/><rect x="6" y="10" width="1" height="1" fill="#ffffff"/><rect x="7" y="10" width="1" height="1" fill="#008040"/><rect x="8" y="10" width="3" height="1" fill="#00c040"/><rect x="11" y="10" width="1" height="1" fill="#000000"/><rect x="1" y="11" width="1" height="1" fill="#008000"/><rect x="3" y="11" width="2" height="1" fill="#207070"/><rect x="5" y="11" width="1" height="1" fill="#ffffff"/><rect x="6" y="11" width="1" height="1" fill="#008040"/><rect x="7" y="11" width="1" height="1" fill="#ffffff"/><rect x="8" y="11" width="1" height="1" fill="#008040"/><rect x="9" y="11" width="2" height="1" fill="#00c040"/><rect x="11" y="11" width="1" height="1" fill="#000000"/><rect x="15" y="11" width="1" height="1" fill="#008000"/><rect x="1" y="12" width="1" height="1" fill="#008000"/><rect x="3" y="12" width="2" height="1" fill="#207070"/><rect x="5" y="12" width="1" height="1" fill="#008040"/><rect x="6" y="12" width="1" height="1" fill="#ffffff"/><rect x="7" y="12" width="1" height="1" fill="#008040"/><rect x="8" y="12" width="3" height="1" fill="#00c040"/><rect x="11" y="12" width="1" height="1" fill="#000000"/><rect x="15" y="12" width="1" height="1" fill="#008000"/><rect x="1" y="13" width="1" height="1" fill="#008000"/><rect x="3" y="13" width="1" height="1" fill="#000000"/><rect x="4" y="13" width="1" height="1" fill="#207070"/><rect x="5" y="13" width="1" height="1" fill="#ffffff"/><rect x="6" y="13" width="1" height="1" fill="#008040"/><rect x="7" y="13" width="1" height="1" fill="#ffffff"/><rect x="8" y="13" width="1" height="1" fill="#008040"/><rect x="9" y="13" width="2" height="1" fill="#00c040"/><rect x="11" y="13" width="1" height="1" fill="#000000"/><rect x="15" y="13" width="1" height="1" fill="#008000"/><rect x="1" y="14" width="3" height="1" fill="#008000"/><rect x="4" y="14" width="8" height="1" fill="#000000"/><rect x="12" y="14" width="4" height="1" fill="#008000"/></svg>
<div class="t" style="left:357px;top:268px;color:#000;font-size:12px;transform:scaleX(0.9030);">"COBI_REF"</div>
<svg style="left:339px;top:283px" width="16" height="15" shape-rendering="crispEdges"><rect x="0" y="0" width="1" height="1" fill="#000000"/><rect x="4" y="0" width="6" height="1" fill="#008000"/><rect x="13" y="0" width="3" height="1" fill="#008000"/><rect x="1" y="1" width="1" height="1" fill="#000000"/><rect x="4" y="1" width="1" height="1" fill="#006000"/><rect x="5" y="1" width="1" height="1" fill="#00c040"/><rect x="6" y="1" width="1" height="1" fill="#ffffff"/><rect x="7" y="1" width="1" height="1" fill="#00c040"/><rect x="8" y="1" width="1" height="1" fill="#ffffff"/><rect x="9" y="1" width="1" height="1" fill="#00c040"/><rect x="10" y="1" width="1" height="1" fill="#303030"/><rect x="15" y="1" width="1" height="1" fill="#008000"/><rect x="2" y="2" width="4" height="1" fill="#006000"/><rect x="6" y="2" width="1" height="1" fill="#ffffff"/><rect x="7" y="2" width="1" height="1" fill="#00c040"/><rect x="8" y="2" width="1" height="1" fill="#ffffff"/><rect x="9" y="2" width="1" height="1" fill="#00c040"/><rect x="10" y="2" width="1" height="1" fill="#ffffff"/><rect x="11" y="2" width="1" height="1" fill="#000000"/><rect x="0" y="3" width="1" height="1" fill="#000000"/><rect x="1" y="3" width="6" height="1" fill="#006000"/><rect x="7" y="3" width="1" height="1" fill="#00c040"/><rect x="8" y="3" width="1" height="1" fill="#ffffff"/><rect x="9" y="3" width="1" height="1" fill="#00c040"/><rect x="10" y="3" width="1" height="1" fill="#ffffff"/><rect x="11" y="3" width="1" height="1" fill="#000000"/><rect x="15" y="3" width="1" height="1" fill="#008000"/><rect x="1" y="4" width="6" height="1" fill="#006000"/><rect x="7" y="4" width="1" height="1" fill="#ffffff"/><rect x="8" y="4" width="1" height="1" fill="#00c040"/><rect x="9" y="4" width="1" height="1" fill="#ffffff"/><rect x="10" y="4" width="1" height="1" fill="#00c040"/><rect x="11" y="4" width="1" height="1" fill="#000000"/><rect x="2" y="5" width="5" height="1" fill="#006000"/><rect x="7" y="5" width="1" height="1" fill="#00c040"/><rect x="8" y="5" width="1" height="1" fill="#ffffff"/><rect x="9" y="5" width="1" height="1" fill="#00c040"/><rect x="10" y="5" width="1" height="1" fill="#ffffff"/><rect x="11" y="5" width="1" height="1" fill="#000000"/><rect x="15" y="5" width="1" height="1" fill="#008000"/><rect x="1" y="6" width="1" height="1" fill="#000000"/><rect x="3" y="6" width="3" height="1" fill="#006000"/><rect x="6" y="6" width="1" height="1" fill="#ffffff"/><rect x="7" y="6" width="1" height="1" fill="#008040"/><rect x="8" y="6" width="1" height="1" fill="#ffffff"/><rect x="9" y="6" width="2" height="1" fill="#00c040"/><rect x="11" y="6" width="1" height="1" fill="#000000"/><rect x="0" y="7" width="1" height="1" fill="#000000"/><rect x="3" y="7" width="2" height="1" fill="#207070"/><rect x="5" y="7" width="1" height="1" fill="#ffffff"/><rect x="6" y="7" width="1" height="1" fill="#008040"/><rect x="7" y="7" width="1" height="1" fill="#ffffff"/><rect x="8" y="7" width="1" height="1" fill="#008040"/><rect x="9" y="7" width="2" height="1" fill="#00c040"/><rect x="11" y="7" width="1" height="1" fill="#000000"/><rect x="15" y="7" width="1" height="1" fill="#008000"/><rect x="3" y="8" width="2" height="1" fill="#207070"/><rect x="5" y="8" width="1" height="1" fill="#008040"/><rect x="6" y="8" width="1" height="1" fill="#ffffff"/><rect x="7" y="8" width="1" height="1" fill="#008040"/><rect x="8" y="8" width="3" height="1" fill="#00c040"/><rect x="11" y="8" width="1" height="1" fill="#000000"/><rect x="3" y="9" width="2" height="1" fill="#207070"/><rect x="5" y="9" width="1" height="1" fill="#ffffff"/><rect x="6" y="9" width="1" height="1" fill="#008040"/><rect x="7" y="9" width="1" height="1" fill="#ffffff"/><rect x="8" y="9" width="1" height="1" fill="#008040"/><rect x="9" y="9" width="2" height="1" fill="#00c040"/><rect x="11" y="9" width="1" height="1" fill="#000000"/><rect x="15" y="9" width="1" height="1" fill="#008000"/><rect x="3" y="10" width="2" height="1" fill="#207070"/><rect x="5" y="10" width="1" height="1" fill="#008040"/><rect x="6" y="10" width="1" height="1" fill="#ffffff"/><rect x="7" y="10" width="1" height="1" fill="#008040"/><rect x="8" y="10" width="3" height="1" fill="#00c040"/><rect x="11" y="10" width="1" height="1" fill="#000000"/><rect x="1" y="11" width="1" height="1" fill="#008000"/><rect x="3" y="11" width="2" height="1" fill="#207070"/><rect x="5" y="11" width="1" height="1" fill="#ffffff"/><rect x="6" y="11" width="1" height="1" fill="#008040"/><rect x="7" y="11" width="1" height="1" fill="#ffffff"/><rect x="8" y="11" width="1" height="1" fill="#008040"/><rect x="9" y="11" width="2" height="1" fill="#00c040"/><rect x="11" y="11" width="1" height="1" fill="#000000"/><rect x="15" y="11" width="1" height="1" fill="#008000"/><rect x="1" y="12" width="1" height="1" fill="#008000"/><rect x="3" y="12" width="2" height="1" fill="#207070"/><rect x="5" y="12" width="1" height="1" fill="#008040"/><rect x="6" y="12" width="1" height="1" fill="#ffffff"/><rect x="7" y="12" width="1" height="1" fill="#008040"/><rect x="8" y="12" width="3" height="1" fill="#00c040"/><rect x="11" y="12" width="1" height="1" fill="#000000"/><rect x="15" y="12" width="1" height="1" fill="#008000"/><rect x="1" y="13" width="1" height="1" fill="#008000"/><rect x="3" y="13" width="1" height="1" fill="#000000"/><rect x="4" y="13" width="1" height="1" fill="#207070"/><rect x="5" y="13" width="1" height="1" fill="#ffffff"/><rect x="6" y="13" width="1" height="1" fill="#008040"/><rect x="7" y="13" width="1" height="1" fill="#ffffff"/><rect x="8" y="13" width="1" height="1" fill="#008040"/><rect x="9" y="13" width="2" height="1" fill="#00c040"/><rect x="11" y="13" width="1" height="1" fill="#000000"/><rect x="15" y="13" width="1" height="1" fill="#008000"/><rect x="1" y="14" width="3" height="1" fill="#008000"/><rect x="4" y="14" width="8" height="1" fill="#000000"/><rect x="12" y="14" width="4" height="1" fill="#008000"/></svg>
<div class="t" style="left:357px;top:284px;color:#000;font-size:12px;transform:scaleX(0.9030);">"COBI_RVS_POC"</div>
<svg style="left:339px;top:299px" width="16" height="15" shape-rendering="crispEdges"><rect x="0" y="0" width="1" height="1" fill="#000000"/><rect x="4" y="0" width="6" height="1" fill="#008000"/><rect x="13" y="0" width="3" height="1" fill="#008000"/><rect x="1" y="1" width="1" height="1" fill="#000000"/><rect x="4" y="1" width="1" height="1" fill="#006000"/><rect x="5" y="1" width="1" height="1" fill="#00c040"/><rect x="6" y="1" width="1" height="1" fill="#ffffff"/><rect x="7" y="1" width="1" height="1" fill="#00c040"/><rect x="8" y="1" width="1" height="1" fill="#ffffff"/><rect x="9" y="1" width="1" height="1" fill="#00c040"/><rect x="10" y="1" width="1" height="1" fill="#303030"/><rect x="15" y="1" width="1" height="1" fill="#008000"/><rect x="2" y="2" width="4" height="1" fill="#006000"/><rect x="6" y="2" width="1" height="1" fill="#ffffff"/><rect x="7" y="2" width="1" height="1" fill="#00c040"/><rect x="8" y="2" width="1" height="1" fill="#ffffff"/><rect x="9" y="2" width="1" height="1" fill="#00c040"/><rect x="10" y="2" width="1" height="1" fill="#ffffff"/><rect x="11" y="2" width="1" height="1" fill="#000000"/><rect x="0" y="3" width="1" height="1" fill="#000000"/><rect x="1" y="3" width="6" height="1" fill="#006000"/><rect x="7" y="3" width="1" height="1" fill="#00c040"/><rect x="8" y="3" width="1" height="1" fill="#ffffff"/><rect x="9" y="3" width="1" height="1" fill="#00c040"/><rect x="10" y="3" width="1" height="1" fill="#ffffff"/><rect x="11" y="3" width="1" height="1" fill="#000000"/><rect x="15" y="3" width="1" height="1" fill="#008000"/><rect x="1" y="4" width="6" height="1" fill="#006000"/><rect x="7" y="4" width="1" height="1" fill="#ffffff"/><rect x="8" y="4" width="1" height="1" fill="#00c040"/><rect x="9" y="4" width="1" height="1" fill="#ffffff"/><rect x="10" y="4" width="1" height="1" fill="#00c040"/><rect x="11" y="4" width="1" height="1" fill="#000000"/><rect x="2" y="5" width="5" height="1" fill="#006000"/><rect x="7" y="5" width="1" height="1" fill="#00c040"/><rect x="8" y="5" width="1" height="1" fill="#ffffff"/><rect x="9" y="5" width="1" height="1" fill="#00c040"/><rect x="10" y="5" width="1" height="1" fill="#ffffff"/><rect x="11" y="5" width="1" height="1" fill="#000000"/><rect x="15" y="5" width="1" height="1" fill="#008000"/><rect x="1" y="6" width="1" height="1" fill="#000000"/><rect x="3" y="6" width="3" height="1" fill="#006000"/><rect x="6" y="6" width="1" height="1" fill="#ffffff"/><rect x="7" y="6" width="1" height="1" fill="#008040"/><rect x="8" y="6" width="1" height="1" fill="#ffffff"/><rect x="9" y="6" width="2" height="1" fill="#00c040"/><rect x="11" y="6" width="1" height="1" fill="#000000"/><rect x="0" y="7" width="1" height="1" fill="#000000"/><rect x="3" y="7" width="2" height="1" fill="#207070"/><rect x="5" y="7" width="1" height="1" fill="#ffffff"/><rect x="6" y="7" width="1" height="1" fill="#008040"/><rect x="7" y="7" width="1" height="1" fill="#ffffff"/><rect x="8" y="7" width="1" height="1" fill="#008040"/><rect x="9" y="7" width="2" height="1" fill="#00c040"/><rect x="11" y="7" width="1" height="1" fill="#000000"/><rect x="15" y="7" width="1" height="1" fill="#008000"/><rect x="3" y="8" width="2" height="1" fill="#207070"/><rect x="5" y="8" width="1" height="1" fill="#008040"/><rect x="6" y="8" width="1" height="1" fill="#ffffff"/><rect x="7" y="8" width="1" height="1" fill="#008040"/><rect x="8" y="8" width="3" height="1" fill="#00c040"/><rect x="11" y="8" width="1" height="1" fill="#000000"/><rect x="3" y="9" width="2" height="1" fill="#207070"/><rect x="5" y="9" width="1" height="1" fill="#ffffff"/><rect x="6" y="9" width="1" height="1" fill="#008040"/><rect x="7" y="9" width="1" height="1" fill="#ffffff"/><rect x="8" y="9" width="1" height="1" fill="#008040"/><rect x="9" y="9" width="2" height="1" fill="#00c040"/><rect x="11" y="9" width="1" height="1" fill="#000000"/><rect x="15" y="9" width="1" height="1" fill="#008000"/><rect x="3" y="10" width="2" height="1" fill="#207070"/><rect x="5" y="10" width="1" height="1" fill="#008040"/><rect x="6" y="10" width="1" height="1" fill="#ffffff"/><rect x="7" y="10" width="1" height="1" fill="#008040"/><rect x="8" y="10" width="3" height="1" fill="#00c040"/><rect x="11" y="10" width="1" height="1" fill="#000000"/><rect x="1" y="11" width="1" height="1" fill="#008000"/><rect x="3" y="11" width="2" height="1" fill="#207070"/><rect x="5" y="11" width="1" height="1" fill="#ffffff"/><rect x="6" y="11" width="1" height="1" fill="#008040"/><rect x="7" y="11" width="1" height="1" fill="#ffffff"/><rect x="8" y="11" width="1" height="1" fill="#008040"/><rect x="9" y="11" width="2" height="1" fill="#00c040"/><rect x="11" y="11" width="1" height="1" fill="#000000"/><rect x="15" y="11" width="1" height="1" fill="#008000"/><rect x="1" y="12" width="1" height="1" fill="#008000"/><rect x="3" y="12" width="2" height="1" fill="#207070"/><rect x="5" y="12" width="1" height="1" fill="#008040"/><rect x="6" y="12" width="1" height="1" fill="#ffffff"/><rect x="7" y="12" width="1" height="1" fill="#008040"/><rect x="8" y="12" width="3" height="1" fill="#00c040"/><rect x="11" y="12" width="1" height="1" fill="#000000"/><rect x="15" y="12" width="1" height="1" fill="#008000"/><rect x="1" y="13" width="1" height="1" fill="#008000"/><rect x="3" y="13" width="1" height="1" fill="#000000"/><rect x="4" y="13" width="1" height="1" fill="#207070"/><rect x="5" y="13" width="1" height="1" fill="#ffffff"/><rect x="6" y="13" width="1" height="1" fill="#008040"/><rect x="7" y="13" width="1" height="1" fill="#ffffff"/><rect x="8" y="13" width="1" height="1" fill="#008040"/><rect x="9" y="13" width="2" height="1" fill="#00c040"/><rect x="11" y="13" width="1" height="1" fill="#000000"/><rect x="15" y="13" width="1" height="1" fill="#008000"/><rect x="1" y="14" width="3" height="1" fill="#008000"/><rect x="4" y="14" width="8" height="1" fill="#000000"/><rect x="12" y="14" width="4" height="1" fill="#008000"/></svg>
<div class="t" style="left:357px;top:300px;color:#000;font-size:12px;transform:scaleX(0.9030);">"COBI_SNELSPOOR_WOWTB"</div>
<div class="btn" style="left:662px;top:151px;width:75px;height:23px;"></div>
<div class="t" style="left:692.0px;top:155px;color:#000;font-size:12px;transform:scaleX(0.8700);">OK</div>
<div class="btn" style="left:662px;top:177px;width:75px;height:23px;"></div>
<div class="t" style="left:683.0px;top:181px;color:#000;font-size:12px;transform:scaleX(0.8700);">Cancel</div>
<div class="btn" style="left:662px;top:203px;width:75px;height:23px;"></div>
<div class="t" style="left:689.0px;top:207px;color:#000;font-size:12px;transform:scaleX(0.8700);"><u>H</u>elp</div>
<div style="left:662px;top:229px;width:75px;height:23px;background:#000"></div>
<div class="btn" style="left:663px;top:230px;width:73px;height:21px;"></div>
<div class="t dis" style="left:676.5px;top:233px;color:#000;font-size:12px;transform:scaleX(0.8700);">A<u>u</u>tomatic</div>
<div class="btn" style="left:662px;top:255px;width:75px;height:23px;"></div>
<div class="t dis" style="left:690.0px;top:259px;color:#000;font-size:12px;transform:scaleX(0.8700);"><u>A</u>dd</div>
<div class="btn" style="left:662px;top:281px;width:75px;height:23px;"></div>
<div class="t dis" style="left:678.5px;top:285px;color:#000;font-size:12px;transform:scaleX(0.8700);">Add <u>P</u>lus</div>
<div class="btn" style="left:662px;top:307px;width:75px;height:23px;"></div>
<div class="t dis" style="left:680.0px;top:311px;color:#000;font-size:12px;transform:scaleX(0.8700);"><u>R</u>emove</div>
<div class="btn" style="left:662px;top:333px;width:75px;height:23px;"></div>
<div class="t" style="left:673.0px;top:337px;color:#000;font-size:12px;transform:scaleX(0.8700);">Remove A<u>l</u>l</div>
<div class="t" style="left:14px;top:346px;color:#000;font-size:12px;transform:scaleX(0.8800);">Equated</div>
<div class="sunk" style="left:15px;top:364px;width:722px;height:200px;background:#fff;"></div>
<div class="hd" style="left:17px;top:366px;width:351px;height:17px"></div>
<div class="hd" style="left:368px;top:366px;width:351px;height:17px"></div>
<div class="t" style="left:23px;top:368px;color:#000;font-size:12px;transform:scaleX(0.8800);">Deleted</div>
<div class="t" style="left:373px;top:368px;color:#000;font-size:12px;transform:scaleX(0.8800);">Created</div>
<div class="chk" style="left:719px;top:382px;width:16px;height:160px"></div>
<div class="sbtn" style="left:719px;top:366px;width:16px;height:16px;"></div>
<svg style="left:723px;top:372px" width="7" height="4"><path d="M3.5 0L7 4H0z" fill="#000"/></svg>
<div class="sbtn" style="left:719px;top:382px;width:16px;height:58px;"></div>
<svg style="left:19px;top:385px" width="16" height="15" shape-rendering="crispEdges"><rect x="2" y="0" width="7" height="1" fill="#303030"/><rect x="1" y="1" width="1" height="1" fill="#00c040"/><rect x="2" y="1" width="1" height="1" fill="#ffffff"/><rect x="3" y="1" width="1" height="1" fill="#00c040"/><rect x="4" y="1" width="1" height="1" fill="#ffffff"/><rect x="5" y="1" width="1" height="1" fill="#00c040"/><rect x="6" y="1" width="1" height="1" fill="#ffffff"/><rect x="7" y="1" width="1" height="1" fill="#00c040"/><rect x="8" y="1" width="1" height="1" fill="#ffffff"/><rect x="0" y="2" width="1" height="1" fill="#40a090"/><rect x="1" y="2" width="1" height="1" fill="#ffffff"/><rect x="2" y="2" width="1" height="1" fill="#00c040"/><rect x="3" y="2" width="1" height="1" fill="#ffffff"/><rect x="4" y="2" width="1" height="1" fill="#00c040"/><rect x="5" y="2" width="1" height="1" fill="#ffffff"/><rect x="6" y="2" width="1" height="1" fill="#00c040"/><rect x="7" y="2" width="1" height="1" fill="#ffffff"/><rect x="8" y="2" width="1" height="1" fill="#00c040"/><rect x="0" y="3" width="1" height="1" fill="#207070"/><rect x="1" y="3" width="1" height="1" fill="#00c040"/><rect x="2" y="3" width="1" height="1" fill="#ffffff"/><rect x="3" y="3" width="1" height="1" fill="#00c040"/><rect x="4" y="3" width="1" height="1" fill="#ffffff"/><rect x="5" y="3" width="1" height="1" fill="#00c040"/><rect x="6" y="3" width="1" height="1" fill="#ffffff"/><rect x="7" y="3" width="1" height="1" fill="#00c040"/><rect x="8" y="3" width="5" height="1" fill="#000000"/><rect x="0" y="4" width="2" height="1" fill="#207070"/><rect x="2" y="4" width="1" height="1" fill="#ffffff"/><rect x="3" y="4" width="1" height="1" fill="#00c040"/><rect x="4" y="4" width="1" height="1" fill="#ffffff"/><rect x="5" y="4" width="1" height="1" fill="#00c040"/><rect x="6" y="4" width="9" height="1" fill="#000000"/><rect x="0" y="5" width="2" height="1" fill="#207070"/><rect x="2" y="5" width="1" height="1" fill="#ffffff"/><rect x="3" y="5" width="1" height="1" fill="#008040"/><rect x="4" y="5" width="1" height="1" fill="#ffffff"/><rect x="5" y="5" width="11" height="1" fill="#000000"/><rect x="0" y="6" width="2" height="1" fill="#207070"/><rect x="2" y="6" width="1" height="1" fill="#008040"/><rect x="3" y="6" width="1" height="1" fill="#ffffff"/><rect x="4" y="6" width="6" height="1" fill="#000000"/><rect x="10" y="6" width="2" height="1" fill="#ffffff"/><rect x="12" y="6" width="3" height="1" fill="#000000"/><rect x="0" y="7" width="2" height="1" fill="#207070"/><rect x="2" y="7" width="1" height="1" fill="#ffffff"/><rect x="3" y="7" width="1" height="1" fill="#008040"/><rect x="4" y="7" width="5" height="1" fill="#000000"/><rect x="9" y="7" width="4" height="1" fill="#ffffff"/><rect x="13" y="7" width="1" height="1" fill="#1020b0"/><rect x="14" y="7" width="2" height="1" fill="#000000"/><rect x="0" y="8" width="2" height="1" fill="#207070"/><rect x="2" y="8" width="1" height="1" fill="#008040"/><rect x="3" y="8" width="1" height="1" fill="#ffffff"/><rect x="4" y="8" width="5" height="1" fill="#000000"/><rect x="9" y="8" width="6" height="1" fill="#ffffff"/><rect x="15" y="8" width="1" height="1" fill="#000000"/><rect x="0" y="9" width="2" height="1" fill="#207070"/><rect x="2" y="9" width="1" height="1" fill="#ffffff"/><rect x="3" y="9" width="1" height="1" fill="#008040"/><rect x="4" y="9" width="4" height="1" fill="#000000"/><rect x="8" y="9" width="6" height="1" fill="#ffffff"/><rect x="14" y="9" width="1" height="1" fill="#000000"/><rect x="0" y="10" width="2" height="1" fill="#207070"/><rect x="2" y="10" width="1" height="1" fill="#008040"/><rect x="3" y="10" width="1" height="1" fill="#ffffff"/><rect x="4" y="10" width="4" height="1" fill="#000000"/><rect x="8" y="10" width="5" height="1" fill="#ffffff"/><rect x="13" y="10" width="1" height="1" fill="#000000"/><rect x="0" y="11" width="2" height="1" fill="#207070"/><rect x="2" y="11" width="1" height="1" fill="#ffffff"/><rect x="3" y="11" width="1" height="1" fill="#008040"/><rect x="4" y="11" width="5" height="1" fill="#000000"/><rect x="9" y="11" width="4" height="1" fill="#ffffff"/><rect x="13" y="11" width="1" height="1" fill="#000000"/><rect x="0" y="12" width="2" height="1" fill="#207070"/><rect x="2" y="12" width="1" height="1" fill="#008040"/><rect x="3" y="12" width="1" height="1" fill="#ffffff"/><rect x="4" y="12" width="3" height="1" fill="#000000"/><rect x="7" y="12" width="1" height="1" fill="#1020b0"/><rect x="8" y="12" width="4" height="1" fill="#ffffff"/><rect x="12" y="12" width="1" height="1" fill="#1020b0"/><rect x="13" y="12" width="1" height="1" fill="#000000"/><rect x="1" y="13" width="4" height="1" fill="#000000"/><rect x="5" y="13" width="5" height="1" fill="#1020b0"/><rect x="10" y="13" width="1" height="1" fill="#ffffff"/><rect x="11" y="13" width="4" height="1" fill="#1020b0"/><rect x="2" y="14" width="2" height="1" fill="#000000"/><rect x="4" y="14" width="12" height="1" fill="#1020b0"/></svg>
<div class="t" style="left:37px;top:387px;color:#000;font-size:12px;transform:scaleX(0.8663);">"gerar600"</div>
<div class="t" style="left:374px;top:387px;color:#000;font-size:12px;transform:scaleX(0.8663);">"gerar600"</div>
<svg style="left:19px;top:401px" width="16" height="15" shape-rendering="crispEdges"><rect x="0" y="0" width="1" height="1" fill="#000000"/><rect x="2" y="0" width="1" height="1" fill="#000000"/><rect x="3" y="0" width="1" height="1" fill="#ffffff"/><rect x="4" y="0" width="1" height="1" fill="#008000"/><rect x="5" y="0" width="1" height="1" fill="#ffffff"/><rect x="6" y="0" width="1" height="1" fill="#008000"/><rect x="7" y="0" width="1" height="1" fill="#ffffff"/><rect x="8" y="0" width="1" height="1" fill="#008000"/><rect x="11" y="0" width="1" height="1" fill="#000000"/><rect x="13" y="0" width="3" height="1" fill="#008000"/><rect x="1" y="1" width="2" height="1" fill="#006000"/><rect x="3" y="1" width="1" height="1" fill="#00c040"/><rect x="4" y="1" width="2" height="1" fill="#006000"/><rect x="6" y="1" width="1" height="1" fill="#00c040"/><rect x="7" y="1" width="2" height="1" fill="#006000"/><rect x="15" y="1" width="1" height="1" fill="#008000"/><rect x="0" y="2" width="1" height="1" fill="#000000"/><rect x="1" y="2" width="8" height="1" fill="#006000"/><rect x="9" y="2" width="4" height="1" fill="#000000"/><rect x="0" y="3" width="8" height="1" fill="#006000"/><rect x="8" y="3" width="7" height="1" fill="#000000"/><rect x="15" y="3" width="1" height="1" fill="#008000"/><rect x="0" y="4" width="6" height="1" fill="#006000"/><rect x="6" y="4" width="9" height="1" fill="#000000"/><rect x="0" y="5" width="1" height="1" fill="#008000"/><rect x="1" y="5" width="4" height="1" fill="#006000"/><rect x="5" y="5" width="10" height="1" fill="#000000"/><rect x="15" y="5" width="1" height="1" fill="#008000"/><rect x="0" y="6" width="1" height="1" fill="#008000"/><rect x="1" y="6" width="1" height="1" fill="#207070"/><rect x="2" y="6" width="2" height="1" fill="#006000"/><rect x="4" y="6" width="6" height="1" fill="#000000"/><rect x="10" y="6" width="2" height="1" fill="#ffffff"/><rect x="12" y="6" width="3" height="1" fill="#000000"/><rect x="0" y="7" width="1" height="1" fill="#008000"/><rect x="1" y="7" width="1" height="1" fill="#207070"/><rect x="2" y="7" width="1" height="1" fill="#ffffff"/><rect x="3" y="7" width="1" height="1" fill="#008040"/><rect x="4" y="7" width="5" height="1" fill="#000000"/><rect x="9" y="7" width="4" height="1" fill="#ffffff"/><rect x="13" y="7" width="1" height="1" fill="#1020b0"/><rect x="14" y="7" width="1" height="1" fill="#000000"/><rect x="15" y="7" width="1" height="1" fill="#008000"/><rect x="0" y="8" width="1" height="1" fill="#008000"/><rect x="1" y="8" width="1" height="1" fill="#207070"/><rect x="2" y="8" width="1" height="1" fill="#008040"/><rect x="3" y="8" width="1" height="1" fill="#ffffff"/><rect x="4" y="8" width="5" height="1" fill="#000000"/><rect x="9" y="8" width="6" height="1" fill="#ffffff"/><rect x="15" y="8" width="1" height="1" fill="#000000"/><rect x="0" y="9" width="1" height="1" fill="#008000"/><rect x="1" y="9" width="1" height="1" fill="#207070"/><rect x="2" y="9" width="1" height="1" fill="#ffffff"/><rect x="3" y="9" width="1" height="1" fill="#008040"/><rect x="4" y="9" width="4" height="1" fill="#000000"/><rect x="8" y="9" width="6" height="1" fill="#ffffff"/><rect x="14" y="9" width="1" height="1" fill="#000000"/><rect x="15" y="9" width="1" height="1" fill="#008000"/><rect x="0" y="10" width="1" height="1" fill="#008000"/><rect x="1" y="10" width="1" height="1" fill="#207070"/><rect x="2" y="10" width="1" height="1" fill="#008040"/><rect x="3" y="10" width="1" height="1" fill="#ffffff"/><rect x="4" y="10" width="4" height="1" fill="#000000"/><rect x="8" y="10" width="5" height="1" fill="#ffffff"/><rect x="13" y="10" width="1" height="1" fill="#000000"/><rect x="14" y="10" width="1" height="1" fill="#008000"/><rect x="0" y="11" width="1" height="1" fill="#008000"/><rect x="1" y="11" width="1" height="1" fill="#207070"/><rect x="2" y="11" width="1" height="1" fill="#ffffff"/><rect x="3" y="11" width="1" height="1" fill="#008040"/><rect x="4" y="11" width="5" height="1" fill="#000000"/><rect x="9" y="11" width="4" height="1" fill="#ffffff"/><rect x="13" y="11" width="1" height="1" fill="#000000"/><rect x="14" y="11" width="2" height="1" fill="#008000"/><rect x="0" y="12" width="1" height="1" fill="#008000"/><rect x="1" y="12" width="1" height="1" fill="#207070"/><rect x="2" y="12" width="1" height="1" fill="#008040"/><rect x="3" y="12" width="1" height="1" fill="#ffffff"/><rect x="4" y="12" width="3" height="1" fill="#000000"/><rect x="7" y="12" width="1" height="1" fill="#1020b0"/><rect x="8" y="12" width="4" height="1" fill="#ffffff"/><rect x="12" y="12" width="1" height="1" fill="#1020b0"/><rect x="13" y="12" width="1" height="1" fill="#000000"/><rect x="14" y="12" width="1" height="1" fill="#008000"/><rect x="0" y="13" width="1" height="1" fill="#008000"/><rect x="1" y="13" width="4" height="1" fill="#000000"/><rect x="5" y="13" width="5" height="1" fill="#1020b0"/><rect x="10" y="13" width="1" height="1" fill="#ffffff"/><rect x="11" y="13" width="4" height="1" fill="#1020b0"/><rect x="15" y="13" width="1" height="1" fill="#008000"/><rect x="0" y="14" width="2" height="1" fill="#008000"/><rect x="2" y="14" width="2" height="1" fill="#000000"/><rect x="4" y="14" width="12" height="1" fill="#1020b0"/></svg>
<div class="t" style="left:37px;top:403px;color:#000;font-size:12px;transform:scaleX(0.8836);">"Administrator"</div>
<div class="t" style="left:374px;top:403px;color:#000;font-size:12px;transform:scaleX(0.8836);">"Administrator"</div>
<svg style="left:19px;top:418px" width="15" height="14" shape-rendering="crispEdges"><rect x="0" y="0" width="14" height="1" fill="#808080"/><rect x="14" y="0" width="1" height="1" fill="#000000"/><rect x="0" y="1" width="1" height="1" fill="#808080"/><rect x="1" y="1" width="12" height="1" fill="#ffffff"/><rect x="13" y="1" width="1" height="1" fill="#303030"/><rect x="14" y="1" width="1" height="1" fill="#000000"/><rect x="0" y="2" width="1" height="1" fill="#808080"/><rect x="1" y="2" width="1" height="1" fill="#ffffff"/><rect x="2" y="2" width="7" height="1" fill="#000080"/><rect x="9" y="2" width="1" height="1" fill="#ffffff"/><rect x="10" y="2" width="1" height="1" fill="#000000"/><rect x="11" y="2" width="1" height="1" fill="#ffffff"/><rect x="12" y="2" width="1" height="1" fill="#000000"/><rect x="13" y="2" width="1" height="1" fill="#303030"/><rect x="14" y="2" width="1" height="1" fill="#000000"/><rect x="0" y="3" width="1" height="1" fill="#808080"/><rect x="1" y="3" width="12" height="1" fill="#ffffff"/><rect x="13" y="3" width="1" height="1" fill="#303030"/><rect x="14" y="3" width="1" height="1" fill="#000000"/><rect x="0" y="4" width="1" height="1" fill="#808080"/><rect x="1" y="4" width="12" height="1" fill="#ffffff"/><rect x="13" y="4" width="1" height="1" fill="#303030"/><rect x="14" y="4" width="1" height="1" fill="#000000"/><rect x="0" y="5" width="1" height="1" fill="#808080"/><rect x="1" y="5" width="2" height="1" fill="#ffffff"/><rect x="3" y="5" width="4" height="1" fill="#808080"/><rect x="7" y="5" width="1" height="1" fill="#ffffff"/><rect x="8" y="5" width="4" height="1" fill="#808080"/><rect x="12" y="5" width="1" height="1" fill="#ffffff"/><rect x="13" y="5" width="1" height="1" fill="#303030"/><rect x="14" y="5" width="1" height="1" fill="#000000"/><rect x="0" y="6" width="1" height="1" fill="#808080"/><rect x="1" y="6" width="12" height="1" fill="#ffffff"/><rect x="13" y="6" width="1" height="1" fill="#303030"/><rect x="14" y="6" width="1" height="1" fill="#000000"/><rect x="0" y="7" width="1" height="1" fill="#808080"/><rect x="1" y="7" width="2" height="1" fill="#ffffff"/><rect x="3" y="7" width="4" height="1" fill="#808080"/><rect x="7" y="7" width="1" height="1" fill="#ffffff"/><rect x="8" y="7" width="4" height="1" fill="#808080"/><rect x="12" y="7" width="1" height="1" fill="#ffffff"/><rect x="13" y="7" width="1" height="1" fill="#303030"/><rect x="14" y="7" width="1" height="1" fill="#000000"/><rect x="0" y="8" width="1" height="1" fill="#808080"/><rect x="1" y="8" width="12" height="1" fill="#ffffff"/><rect x="13" y="8" width="1" height="1" fill="#303030"/><rect x="14" y="8" width="1" height="1" fill="#000000"/><rect x="0" y="9" width="1" height="1" fill="#808080"/><rect x="1" y="9" width="2" height="1" fill="#ffffff"/><rect x="3" y="9" width="4" height="1" fill="#808080"/><rect x="7" y="9" width="1" height="1" fill="#ffffff"/><rect x="8" y="9" width="4" height="1" fill="#808080"/><rect x="12" y="9" width="1" height="1" fill="#ffffff"/><rect x="13" y="9" width="1" height="1" fill="#303030"/><rect x="14" y="9" width="1" height="1" fill="#000000"/><rect x="0" y="10" width="1" height="1" fill="#808080"/><rect x="1" y="10" width="12" height="1" fill="#ffffff"/><rect x="13" y="10" width="1" height="1" fill="#303030"/><rect x="14" y="10" width="1" height="1" fill="#000000"/><rect x="0" y="11" width="1" height="1" fill="#808080"/><rect x="1" y="11" width="12" height="1" fill="#ffffff"/><rect x="13" y="11" width="1" height="1" fill="#303030"/><rect x="14" y="11" width="1" height="1" fill="#000000"/><rect x="0" y="12" width="1" height="1" fill="#808080"/><rect x="1" y="12" width="13" height="1" fill="#303030"/><rect x="14" y="12" width="1" height="1" fill="#000000"/><rect x="0" y="13" width="15" height="1" fill="#000000"/></svg>
<div class="t" style="left:37px;top:419px;color:#000;font-size:12px;transform:scaleX(0.9118);">"COBI_OBI".."COBI_OBI"."OBI_INIT_USER_VAR_TABLE"</div>
<div class="t" style="left:374px;top:419px;color:#000;font-size:12px;transform:scaleX(0.9118);">"COBI_OBI".."COBI_OBI"."OBI_INIT_USER_VAR_TABLE"</div>
<svg style="left:19px;top:434px" width="15" height="14" shape-rendering="crispEdges"><rect x="0" y="0" width="14" height="1" fill="#808080"/><rect x="14" y="0" width="1" height="1" fill="#000000"/><rect x="0" y="1" width="1" height="1" fill="#808080"/><rect x="1" y="1" width="12" height="1" fill="#ffffff"/><rect x="13" y="1" width="1" height="1" fill="#303030"/><rect x="14" y="1" width="1" height="1" fill="#000000"/><rect x="0" y="2" width="1" height="1" fill="#808080"/><rect x="1" y="2" width="1" height="1" fill="#ffffff"/><rect x="2" y="2" width="7" height="1" fill="#000080"/><rect x="9" y="2" width="1" height="1" fill="#ffffff"/><rect x="10" y="2" width="1" height="1" fill="#000000"/><rect x="11" y="2" width="1" height="1" fill="#ffffff"/><rect x="12" y="2" width="1" height="1" fill="#000000"/><rect x="13" y="2" width="1" height="1" fill="#303030"/><rect x="14" y="2" width="1" height="1" fill="#000000"/><rect x="0" y="3" width="1" height="1" fill="#808080"/><rect x="1" y="3" width="12" height="1" fill="#ffffff"/><rect x="13" y="3" width="1" height="1" fill="#303030"/><rect x="14" y="3" width="1" height="1" fill="#000000"/><rect x="0" y="4" width="1" height="1" fill="#808080"/><rect x="1" y="4" width="12" height="1" fill="#ffffff"/><rect x="13" y="4" width="1" height="1" fill="#303030"/><rect x="14" y="4" width="1" height="1" fill="#000000"/><rect x="0" y="5" width="1" height="1" fill="#808080"/><rect x="1" y="5" width="2" height="1" fill="#ffffff"/><rect x="3" y="5" width="4" height="1" fill="#808080"/><rect x="7" y="5" width="1" height="1" fill="#ffffff"/><rect x="8" y="5" width="4" height="1" fill="#808080"/><rect x="12" y="5" width="1" height="1" fill="#ffffff"/><rect x="13" y="5" width="1" height="1" fill="#303030"/><rect x="14" y="5" width="1" height="1" fill="#000000"/><rect x="0" y="6" width="1" height="1" fill="#808080"/><rect x="1" y="6" width="12" height="1" fill="#ffffff"/><rect x="13" y="6" width="1" height="1" fill="#303030"/><rect x="14" y="6" width="1" height="1" fill="#000000"/><rect x="0" y="7" width="1" height="1" fill="#808080"/><rect x="1" y="7" width="2" height="1" fill="#ffffff"/><rect x="3" y="7" width="4" height="1" fill="#808080"/><rect x="7" y="7" width="1" height="1" fill="#ffffff"/><rect x="8" y="7" width="4" height="1" fill="#808080"/><rect x="12" y="7" width="1" height="1" fill="#ffffff"/><rect x="13" y="7" width="1" height="1" fill="#303030"/><rect x="14" y="7" width="1" height="1" fill="#000000"/><rect x="0" y="8" width="1" height="1" fill="#808080"/><rect x="1" y="8" width="12" height="1" fill="#ffffff"/><rect x="13" y="8" width="1" height="1" fill="#303030"/><rect x="14" y="8" width="1" height="1" fill="#000000"/><rect x="0" y="9" width="1" height="1" fill="#808080"/><rect x="1" y="9" width="2" height="1" fill="#ffffff"/><rect x="3" y="9" width="4" height="1" fill="#808080"/><rect x="7" y="9" width="1" height="1" fill="#ffffff"/><rect x="8" y="9" width="4" height="1" fill="#808080"/><rect x="12" y="9" width="1" height="1" fill="#ffffff"/><rect x="13" y="9" width="1" height="1" fill="#303030"/><rect x="14" y="9" width="1" height="1" fill="#000000"/><rect x="0" y="10" width="1" height="1" fill="#808080"/><rect x="1" y="10" width="12" height="1" fill="#ffffff"/><rect x="13" y="10" width="1" height="1" fill="#303030"/><rect x="14" y="10" width="1" height="1" fill="#000000"/><rect x="0" y="11" width="1" height="1" fill="#808080"/><rect x="1" y="11" width="12" height="1" fill="#ffffff"/><rect x="13" y="11" width="1" height="1" fill="#303030"/><rect x="14" y="11" width="1" height="1" fill="#000000"/><rect x="0" y="12" width="1" height="1" fill="#808080"/><rect x="1" y="12" width="13" height="1" fill="#303030"/><rect x="14" y="12" width="1" height="1" fill="#000000"/><rect x="0" y="13" width="15" height="1" fill="#000000"/></svg>
<div class="t" style="left:37px;top:435px;color:#000;font-size:12px;transform:scaleX(0.9111);">"COBI_OBI".."COBI_OBI"."OBI_INIT_USER_AUT_TABLE"</div>
<div class="t" style="left:374px;top:435px;color:#000;font-size:12px;transform:scaleX(0.9111);">"COBI_OBI".."COBI_OBI"."OBI_INIT_USER_AUT_TABLE"</div>
<svg style="left:19px;top:450px" width="15" height="14" shape-rendering="crispEdges"><rect x="0" y="0" width="14" height="1" fill="#808080"/><rect x="14" y="0" width="1" height="1" fill="#000000"/><rect x="0" y="1" width="1" height="1" fill="#808080"/><rect x="1" y="1" width="12" height="1" fill="#ffffff"/><rect x="13" y="1" width="1" height="1" fill="#303030"/><rect x="14" y="1" width="1" height="1" fill="#000000"/><rect x="0" y="2" width="1" height="1" fill="#808080"/><rect x="1" y="2" width="1" height="1" fill="#ffffff"/><rect x="2" y="2" width="7" height="1" fill="#000080"/><rect x="9" y="2" width="1" height="1" fill="#ffffff"/><rect x="10" y="2" width="1" height="1" fill="#000000"/><rect x="11" y="2" width="1" height="1" fill="#ffffff"/><rect x="12" y="2" width="1" height="1" fill="#000000"/><rect x="13" y="2" width="1" height="1" fill="#303030"/><rect x="14" y="2" width="1" height="1" fill="#000000"/><rect x="0" y="3" width="1" height="1" fill="#808080"/><rect x="1" y="3" width="12" height="1" fill="#ffffff"/><rect x="13" y="3" width="1" height="1" fill="#303030"/><rect x="14" y="3" width="1" height="1" fill="#000000"/><rect x="0" y="4" width="1" height="1" fill="#808080"/><rect x="1" y="4" width="12" height="1" fill="#ffffff"/><rect x="13" y="4" width="1" height="1" fill="#303030"/><rect x="14" y="4" width="1" height="1" fill="#000000"/><rect x="0" y="5" width="1" height="1" fill="#808080"/><rect x="1" y="5" width="2" height="1" fill="#ffffff"/><rect x="3" y="5" width="4" height="1" fill="#808080"/><rect x="7" y="5" width="1" height="1" fill="#ffffff"/><rect x="8" y="5" width="4" height="1" fill="#808080"/><rect x="12" y="5" width="1" height="1" fill="#ffffff"/><rect x="13" y="5" width="1" height="1" fill="#303030"/><rect x="14" y="5" width="1" height="1" fill="#000000"/><rect x="0" y="6" width="1" height="1" fill="#808080"/><rect x="1" y="6" width="12" height="1" fill="#ffffff"/><rect x="13" y="6" width="1" height="1" fill="#303030"/><rect x="14" y="6" width="1" height="1" fill="#000000"/><rect x="0" y="7" width="1" height="1" fill="#808080"/><rect x="1" y="7" width="2" height="1" fill="#ffffff"/><rect x="3" y="7" width="4" height="1" fill="#808080"/><rect x="7" y="7" width="1" height="1" fill="#ffffff"/><rect x="8" y="7" width="4" height="1" fill="#808080"/><rect x="12" y="7" width="1" height="1" fill="#ffffff"/><rect x="13" y="7" width="1" height="1" fill="#303030"/><rect x="14" y="7" width="1" height="1" fill="#000000"/><rect x="0" y="8" width="1" height="1" fill="#808080"/><rect x="1" y="8" width="12" height="1" fill="#ffffff"/><rect x="13" y="8" width="1" height="1" fill="#303030"/><rect x="14" y="8" width="1" height="1" fill="#000000"/><rect x="0" y="9" width="1" height="1" fill="#808080"/><rect x="1" y="9" width="2" height="1" fill="#ffffff"/><rect x="3" y="9" width="4" height="1" fill="#808080"/><rect x="7" y="9" width="1" height="1" fill="#ffffff"/><rect x="8" y="9" width="4" height="1" fill="#808080"/><rect x="12" y="9" width="1" height="1" fill="#ffffff"/><rect x="13" y="9" width="1" height="1" fill="#303030"/><rect x="14" y="9" width="1" height="1" fill="#000000"/><rect x="0" y="10" width="1" height="1" fill="#808080"/><rect x="1" y="10" width="12" height="1" fill="#ffffff"/><rect x="13" y="10" width="1" height="1" fill="#303030"/><rect x="14" y="10" width="1" height="1" fill="#000000"/><rect x="0" y="11" width="1" height="1" fill="#808080"/><rect x="1" y="11" width="12" height="1" fill="#ffffff"/><rect x="13" y="11" width="1" height="1" fill="#303030"/><rect x="14" y="11" width="1" height="1" fill="#000000"/><rect x="0" y="12" width="1" height="1" fill="#808080"/><rect x="1" y="12" width="13" height="1" fill="#303030"/><rect x="14" y="12" width="1" height="1" fill="#000000"/><rect x="0" y="13" width="15" height="1" fill="#000000"/></svg>
<div class="t" style="left:37px;top:451px;color:#000;font-size:12px;transform:scaleX(0.9054);">"COBI_OBI".."COBI_OBI"."S_NQ_ACCT"</div>
<div class="t" style="left:374px;top:451px;color:#000;font-size:12px;transform:scaleX(0.9054);">"COBI_OBI".."COBI_OBI"."S_NQ_ACCT"</div>
<svg style="left:20px;top:466px" width="14" height="14" shape-rendering="crispEdges"><rect x="1" y="0" width="2" height="1" fill="#000000"/><rect x="0" y="1" width="1" height="1" fill="#000000"/><rect x="1" y="1" width="2" height="1" fill="#f0f070"/><rect x="3" y="1" width="1" height="1" fill="#000000"/><rect x="0" y="2" width="1" height="1" fill="#000000"/><rect x="1" y="2" width="3" height="1" fill="#f0f070"/><rect x="4" y="2" width="1" height="1" fill="#000000"/><rect x="1" y="3" width="1" height="1" fill="#000000"/><rect x="2" y="3" width="3" height="1" fill="#f0f070"/><rect x="5" y="3" width="1" height="1" fill="#000000"/><rect x="2" y="4" width="1" height="1" fill="#000000"/><rect x="3" y="4" width="3" height="1" fill="#f0f070"/><rect x="6" y="4" width="1" height="1" fill="#000000"/><rect x="3" y="5" width="1" height="1" fill="#000000"/><rect x="4" y="5" width="3" height="1" fill="#f0f070"/><rect x="7" y="5" width="1" height="1" fill="#000000"/><rect x="4" y="6" width="1" height="1" fill="#000000"/><rect x="5" y="6" width="3" height="1" fill="#f0f070"/><rect x="8" y="6" width="4" height="1" fill="#000000"/><rect x="5" y="7" width="1" height="1" fill="#000000"/><rect x="6" y="7" width="1" height="1" fill="#f0f070"/><rect x="7" y="7" width="1" height="1" fill="#909020"/><rect x="8" y="7" width="4" height="1" fill="#f0f070"/><rect x="12" y="7" width="1" height="1" fill="#000000"/><rect x="6" y="8" width="1" height="1" fill="#000000"/><rect x="7" y="8" width="1" height="1" fill="#f0f070"/><rect x="8" y="8" width="1" height="1" fill="#909020"/><rect x="9" y="8" width="4" height="1" fill="#f0f070"/><rect x="13" y="8" width="1" height="1" fill="#000000"/><rect x="5" y="9" width="1" height="1" fill="#000000"/><rect x="6" y="9" width="3" height="1" fill="#f0f070"/><rect x="9" y="9" width="1" height="1" fill="#909020"/><rect x="10" y="9" width="3" height="1" fill="#f0f070"/><rect x="13" y="9" width="1" height="1" fill="#000000"/><rect x="5" y="10" width="1" height="1" fill="#000000"/><rect x="6" y="10" width="7" height="1" fill="#f0f070"/><rect x="13" y="10" width="1" height="1" fill="#000000"/><rect x="5" y="11" width="1" height="1" fill="#000000"/><rect x="6" y="11" width="4" height="1" fill="#f0f070"/><rect x="10" y="11" width="2" height="1" fill="#000000"/><rect x="12" y="11" width="1" height="1" fill="#f0f070"/><rect x="13" y="11" width="1" height="1" fill="#000000"/><rect x="6" y="12" width="1" height="1" fill="#000000"/><rect x="7" y="12" width="2" height="1" fill="#f0f070"/><rect x="9" y="12" width="1" height="1" fill="#000000"/><rect x="10" y="12" width="2" height="1" fill="#909020"/><rect x="12" y="12" width="1" height="1" fill="#000000"/><rect x="7" y="13" width="5" height="1" fill="#000000"/></svg>
<div class="t" style="left:37px;top:467px;color:#000;font-size:12px;transform:scaleX(0.9109);">"COBI_OBI".."COBI_OBI"."OBI_INIT_USER_AUT_TABLE"."GEB...</div>
<div class="t" style="left:374px;top:467px;color:#000;font-size:12px;transform:scaleX(0.9109);">"COBI_OBI".."COBI_OBI"."OBI_INIT_USER_AUT_TABLE"."GEBR...</div>
<svg style="left:22px;top:481px" width="10" height="14" shape-rendering="crispEdges"><rect x="0" y="0" width="10" height="1" fill="#000000"/><rect x="2" y="1" width="6" height="1" fill="#a0a0ff"/><rect x="2" y="2" width="6" height="1" fill="#000080"/><rect x="2" y="3" width="6" height="1" fill="#20e0f8"/><rect x="2" y="4" width="6" height="1" fill="#20e0f8"/><rect x="2" y="5" width="1" height="1" fill="#20e0f8"/><rect x="3" y="5" width="4" height="1" fill="#000080"/><rect x="7" y="5" width="1" height="1" fill="#20e0f8"/><rect x="2" y="6" width="6" height="1" fill="#20e0f8"/><rect x="2" y="7" width="1" height="1" fill="#20e0f8"/><rect x="3" y="7" width="4" height="1" fill="#000080"/><rect x="7" y="7" width="1" height="1" fill="#20e0f8"/><rect x="2" y="8" width="6" height="1" fill="#20e0f8"/><rect x="2" y="9" width="1" height="1" fill="#20e0f8"/><rect x="3" y="9" width="4" height="1" fill="#000080"/><rect x="7" y="9" width="1" height="1" fill="#20e0f8"/><rect x="2" y="10" width="6" height="1" fill="#20e0f8"/><rect x="2" y="11" width="6" height="1" fill="#20e0f8"/><rect x="2" y="12" width="6" height="1" fill="#20e0f8"/><rect x="0" y="13" width="10" height="1" fill="#000000"/></svg>
<div class="t" style="left:37px;top:483px;color:#000;font-size:12px;transform:scaleX(0.9018);">"COBI_OBI".."COBI_OBI"."S_NQ_ACCT"."CACHE_IND_FLG"</div>
<div class="t" style="left:374px;top:483px;color:#000;font-size:12px;transform:scaleX(0.9018);">"COBI_OBI".."COBI_OBI"."S_NQ_ACCT"."CACHE_IND_FLG"</div>
<svg style="left:22px;top:497px" width="10" height="14" shape-rendering="crispEdges"><rect x="0" y="0" width="10" height="1" fill="#000000"/><rect x="2" y="1" width="6" height="1" fill="#a0a0ff"/><rect x="2" y="2" width="6" height="1" fill="#000080"/><rect x="2" y="3" width="6" height="1" fill="#20e0f8"/><rect x="2" y="4" width="6" height="1" fill="#20e0f8"/><rect x="2" y="5" width="1" height="1" fill="#20e0f8"/><rect x="3" y="5" width="4" height="1" fill="#000080"/><rect x="7" y="5" width="1" height="1" fill="#20e0f8"/><rect x="2" y="6" width="6" height="1" fill="#20e0f8"/><rect x="2" y="7" width="1" height="1" fill="#20e0f8"/><rect x="3" y="7" width="4" height="1" fill="#000080"/><rect x="7" y="7" width="1" height="1" fill="#20e0f8"/><rect x="2" y="8" width="6" height="1" fill="#20e0f8"/><rect x="2" y="9" width="1" height="1" fill="#20e0f8"/><rect x="3" y="9" width="4" height="1" fill="#000080"/><rect x="7" y="9" width="1" height="1" fill="#20e0f8"/><rect x="2" y="10" width="6" height="1" fill="#20e0f8"/><rect x="2" y="11" width="6" height="1" fill="#20e0f8"/><rect x="2" y="12" width="6" height="1" fill="#20e0f8"/><rect x="0" y="13" width="10" height="1" fill="#000000"/></svg>
<div class="t" style="left:37px;top:499px;color:#000;font-size:12px;transform:scaleX(0.9011);">"COBI_OBI".."COBI_OBI"."S_NQ_ACCT"."COMPILE_TIME_SEC"</div>
<div class="t" style="left:374px;top:499px;color:#000;font-size:12px;transform:scaleX(0.9011);">"COBI_OBI".."COBI_OBI"."S_NQ_ACCT"."COMPILE_TIME_SEC"</div>
<svg style="left:22px;top:513px" width="10" height="14" shape-rendering="crispEdges"><rect x="0" y="0" width="10" height="1" fill="#000000"/><rect x="2" y="1" width="6" height="1" fill="#a0a0ff"/><rect x="2" y="2" width="6" height="1" fill="#000080"/><rect x="2" y="3" width="6" height="1" fill="#20e0f8"/><rect x="2" y="4" width="6" height="1" fill="#20e0f8"/><rect x="2" y="5" width="1" height="1" fill="#20e0f8"/><rect x="3" y="5" width="4" height="1" fill="#000080"/><rect x="7" y="5" width="1" height="1" fill="#20e0f8"/><rect x="2" y="6" width="6" height="1" fill="#20e0f8"/><rect x="2" y="7" width="1" height="1" fill="#20e0f8"/><rect x="3" y="7" width="4" height="1" fill="#000080"/><rect x="7" y="7" width="1" height="1" fill="#20e0f8"/><rect x="2" y="8" width="6" height="1" fill="#20e0f8"/><rect x="2" y="9" width="1" height="1" fill="#20e0f8"/><rect x="3" y="9" width="4" height="1" fill="#000080"/><rect x="7" y="9" width="1" height="1" fill="#20e0f8"/><rect x="2" y="10" width="6" height="1" fill="#20e0f8"/><rect x="2" y="11" width="6" height="1" fill="#20e0f8"/><rect x="2" y="12" width="6" height="1" fill="#20e0f8"/><rect x="0" y="13" width="10" height="1" fill="#000000"/></svg>
<div class="t" style="left:37px;top:515px;color:#000;font-size:12px;transform:scaleX(0.9011);">"COBI_OBI".."COBI_OBI"."S_NQ_ACCT"."CUM_DB_TIME_SEC"</div>
<div class="t" style="left:374px;top:515px;color:#000;font-size:12px;transform:scaleX(0.9011);">"COBI_OBI".."COBI_OBI"."S_NQ_ACCT"."CUM_DB_TIME_SEC"</div>
<div class="red" style="left:671px;top:151px;transform:scaleX(1.0)">2</div>
<svg style="left:660px;top:228px" width="16" height="24"><path d="M8 5 H11.4 V19 H7.9 V9.6 Q6.6 10.8 4.7 11.5 V8.4 Q6.9 7.4 8 5 Z" fill="#f00"/></svg>
<svg style="left:780px;top:322px" width="24" height="26"><ellipse cx="12.4" cy="13.8" rx="4.6" ry="6.8" fill="#f00"/><ellipse cx="12.3" cy="13.9" rx="1.5" ry="4.8" fill="#d4d0c8"/></svg>
<svg style="left:0;top:0" width="841" height="526"><path d="M787.5 316.5 L737.5 248.5" stroke="#f00" stroke-width="2.7"/><path d="M731 242 L741.5 247.5 L734 252Z" fill="#f00" stroke="#f00" stroke-width="0.8" stroke-linejoin="round"/></svg>
</body></html>
